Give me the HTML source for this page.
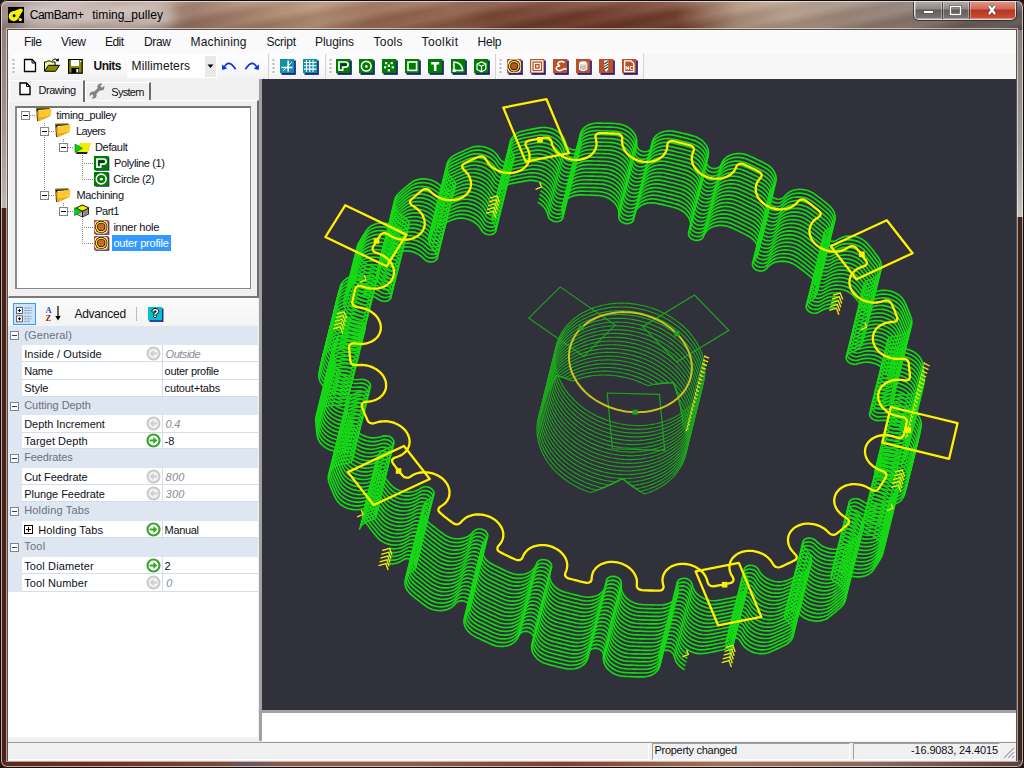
<!DOCTYPE html>
<html><head><meta charset="utf-8"><title>CamBam+ timing_pulley</title><style>
html,body{margin:0;padding:0;width:1024px;height:768px;overflow:hidden;background:#1c1412;font-family:"Liberation Sans",sans-serif}
#root{position:absolute;left:0;top:0;width:1024px;height:768px;overflow:hidden;border-radius:7px}
.t{position:absolute;white-space:pre;font-family:"Liberation Sans",sans-serif}
#frame{position:absolute;left:0;top:0;width:1024px;height:768px;box-sizing:border-box;border:1px solid #140c0a;border-radius:7px;box-shadow:inset 0 0 0 1px rgba(255,255,255,.62);pointer-events:none}
#cap{position:absolute;left:0;top:0;width:1024px;height:30px;background:
 linear-gradient(rgba(255,255,255,.20),rgba(255,255,255,.04) 45%,rgba(0,0,0,.10)),
 repeating-linear-gradient(168deg,rgba(255,255,255,.07) 0,rgba(0,0,0,.06) 9px,rgba(255,255,255,.07) 18px),
 linear-gradient(90deg,#9c8680 0,#ab948c 6%,#a48a7e 14%,#96705e 19%,#a98468 27%,#b08a6c 31%,#94644a 37%,#8b5a42 44%,#76402c 48%,#6c3322 56%,#6e3624 66%,#8a5e48 68.5%,#ab8c76 72%,#b39a86 77%,#9c8474 82%,#8a766c 88%,#6e605c 94%,#5c5250 100%)}
#capglow{position:absolute;left:20px;top:3px;width:155px;height:24px;border-radius:12px;background:rgba(255,255,255,.42);filter:blur(6px)}
#capbtn{position:absolute;left:914px;top:0;width:102px;height:19.5px;border:1px solid rgba(255,255,255,.75);border-top:none;border-radius:0 0 5px 5px;box-sizing:border-box;overflow:hidden;box-shadow:0 0 0 1px rgba(40,30,30,.7)}
.cb{position:absolute;top:0;height:19px;background:linear-gradient(#b9b4b2,#8c8684 48%,#625c5a 52%,#7c7674);border-right:1px solid rgba(40,30,30,.6);box-shadow:inset 0 0 0 1px rgba(255,255,255,.35);box-sizing:border-box}
.cx{background:linear-gradient(#e0a090,#cf6a55 48%,#b83320 52%,#cc5036);border-right:none}
</style></head><body><div id="root">
<div id="cap"></div>
<div id="capglow"></div>
<div style="position:absolute;left:0px;top:30px;width:8px;height:180px;background:linear-gradient(#94807a,#a4948e 55%,#c0b6b0)"></div>
<div style="position:absolute;left:0px;top:208px;width:8px;height:560px;background:#4a2218"></div>
<div style="position:absolute;left:1016px;top:30px;width:8px;height:190px;background:linear-gradient(#85807e,#a09c9a 60%,#c6c2be)"></div>
<div style="position:absolute;left:1016px;top:217px;width:8px;height:551px;background:#3d2620"></div>
<div style="position:absolute;left:0px;top:760px;width:1024px;height:8px;background:linear-gradient(90deg,#5a281c 0,#6a3020 10%,#7a4a3c 22%,#6a5560 24%,#8a5a48 28%,#8c5e4a 40%,#7a4030 55%,#a07058 70%,#8a6a5c 85%,#5a4038 100%)"></div>
<div style="position:absolute;left:7px;top:29px;width:1010px;height:732px;border:1px solid #5a504c;box-sizing:border-box;background:#f0f0f0"></div>
<div style="position:absolute;left:6px;top:28px;width:1012px;height:734px;border:1px solid rgba(255,255,255,.55);box-sizing:border-box;"></div>
<div id="capbtn"><div class="cb" style="left:0;width:28px"></div><div class="cb" style="left:28px;width:27px"></div><div class="cb cx" style="left:55px;width:47px"></div></div>
<svg style="position:absolute;left:914px;top:0px" width="102" height="20" viewBox="0 0 102 20"><rect x="9.5" y="10.5" width="10" height="3" fill="#fff" stroke="#444" stroke-width=".8"/><rect x="36.5" y="6.5" width="10" height="8" fill="none" stroke="#444" stroke-width="2.6"/><rect x="36.5" y="6.5" width="10" height="8" fill="none" stroke="#fff" stroke-width="1.5"/><path d="M75,6 l6,8 M81,6 l-6,8" stroke="#444" stroke-width="3.6"/><path d="M75,6 l6,8 M81,6 l-6,8" stroke="#fff" stroke-width="2.3"/></svg>
<svg style="position:absolute;left:8px;top:7px" width="16" height="16" viewBox="0 0 16 16"><rect width="16" height="16" fill="#000"/><g fill="#f5f500"><circle cx="5.7" cy="9.2" r="5"/><circle cx="12.9" cy="3.2" r="1.8"/><path d="M2.2,5.6 L11.9,1.7 L14.6,3.9 L9.8,12.2z"/></g><circle cx="6.1" cy="8.8" r="1.45" fill="#000"/><circle cx="12.3" cy="12.6" r="1.7" fill="#f5f500"/></svg>
<span class="t" style="left:29.7px;top:8.8px;font-size:12px;line-height:12px;letter-spacing:-0.453px;color:#000;">CamBam+</span>
<span class="t" style="left:92.2px;top:8.8px;font-size:12px;line-height:12px;letter-spacing:0.064px;color:#000;">timing_pulley</span>
<div style="position:absolute;left:8px;top:30px;width:1008px;height:24px;background:#fafafa"></div>
<span class="t" style="left:24.0px;top:35.7px;font-size:12px;line-height:12px;letter-spacing:-0.445px;color:#14141e;">File</span>
<span class="t" style="left:61.0px;top:35.7px;font-size:12px;line-height:12px;letter-spacing:-0.264px;color:#14141e;">View</span>
<span class="t" style="left:105.0px;top:35.7px;font-size:12px;line-height:12px;letter-spacing:-0.559px;color:#14141e;">Edit</span>
<span class="t" style="left:144.0px;top:35.7px;font-size:12px;line-height:12px;letter-spacing:-0.334px;color:#14141e;">Draw</span>
<span class="t" style="left:190.5px;top:35.7px;font-size:12px;line-height:12px;letter-spacing:0.163px;color:#14141e;">Machining</span>
<span class="t" style="left:266.5px;top:35.7px;font-size:12px;line-height:12px;letter-spacing:-0.235px;color:#14141e;">Script</span>
<span class="t" style="left:315.0px;top:35.7px;font-size:12px;line-height:12px;letter-spacing:-0.059px;color:#14141e;">Plugins</span>
<span class="t" style="left:373.5px;top:35.7px;font-size:12px;line-height:12px;letter-spacing:0.247px;color:#14141e;">Tools</span>
<span class="t" style="left:421.5px;top:35.7px;font-size:12px;line-height:12px;letter-spacing:0.415px;color:#14141e;">Toolkit</span>
<span class="t" style="left:477.5px;top:35.7px;font-size:12px;line-height:12px;letter-spacing:-0.226px;color:#14141e;">Help</span>
<div style="position:absolute;left:8px;top:54px;width:1008px;height:25px;background:#f7f7f7"></div>
<div style="position:absolute;left:10px;top:54px;width:259px;height:25px;background:linear-gradient(#fdfdfd,#f9f9f9 60%,#f1f1f1);border-radius:3px 0 0 3px;border-right:1px solid #d4d4d4;box-sizing:border-box"></div>
<svg style="position:absolute;left:12px;top:58px" width="3" height="18" viewBox="0 0 3 18"><rect x="0.5" y="1" width="2" height="2" fill="#b9b9b9"/><rect x="0.5" y="5" width="2" height="2" fill="#b9b9b9"/><rect x="0.5" y="9" width="2" height="2" fill="#b9b9b9"/><rect x="0.5" y="13" width="2" height="2" fill="#b9b9b9"/></svg>
<div style="position:absolute;left:270px;top:54px;width:55.5px;height:25px;background:linear-gradient(#fdfdfd,#f9f9f9 60%,#f1f1f1);border-radius:3px 0 0 3px;border-right:1px solid #d4d4d4;box-sizing:border-box"></div>
<svg style="position:absolute;left:272px;top:58px" width="3" height="18" viewBox="0 0 3 18"><rect x="0.5" y="1" width="2" height="2" fill="#b9b9b9"/><rect x="0.5" y="5" width="2" height="2" fill="#b9b9b9"/><rect x="0.5" y="9" width="2" height="2" fill="#b9b9b9"/><rect x="0.5" y="13" width="2" height="2" fill="#b9b9b9"/></svg>
<div style="position:absolute;left:326.5px;top:54px;width:169.5px;height:25px;background:linear-gradient(#fdfdfd,#f9f9f9 60%,#f1f1f1);border-radius:3px 0 0 3px;border-right:1px solid #d4d4d4;box-sizing:border-box"></div>
<svg style="position:absolute;left:328.5px;top:58px" width="3" height="18" viewBox="0 0 3 18"><rect x="0.5" y="1" width="2" height="2" fill="#b9b9b9"/><rect x="0.5" y="5" width="2" height="2" fill="#b9b9b9"/><rect x="0.5" y="9" width="2" height="2" fill="#b9b9b9"/><rect x="0.5" y="13" width="2" height="2" fill="#b9b9b9"/></svg>
<div style="position:absolute;left:497px;top:54px;width:147px;height:25px;background:linear-gradient(#fdfdfd,#f9f9f9 60%,#f1f1f1);border-radius:3px 0 0 3px;border-right:1px solid #d4d4d4;box-sizing:border-box"></div>
<svg style="position:absolute;left:499px;top:58px" width="3" height="18" viewBox="0 0 3 18"><rect x="0.5" y="1" width="2" height="2" fill="#b9b9b9"/><rect x="0.5" y="5" width="2" height="2" fill="#b9b9b9"/><rect x="0.5" y="9" width="2" height="2" fill="#b9b9b9"/><rect x="0.5" y="13" width="2" height="2" fill="#b9b9b9"/></svg>
<svg style="position:absolute;left:23px;top:58px" width="14" height="16" viewBox="0 0 14 16"><path d="M1.5,1.5 h7.5 l3.5,3.5 v8.5 h-11z" fill="#fff" stroke="#000" stroke-width="1.3"/><path d="M9,1.5 v3.5 h3.5" fill="none" stroke="#000" stroke-width="1"/></svg>
<svg style="position:absolute;left:43px;top:57px" width="18" height="16" viewBox="0 0 18 16"><path d="M9,3.5 q3,-3 6,-0.5" fill="none" stroke="#000" stroke-width="1"/><path d="M15.8,1 v3.2 h-3.2z" fill="#000"/><path d="M1.5,14 v-9 h2 l1,-1 h3 l1,1 h3.5 v3" fill="#f4f4a0" stroke="#000" stroke-width="1"/><path d="M1.5,14.3 l4,-6 h11 l-4,6z" fill="#8a8a00" stroke="#000" stroke-width="1"/></svg>
<svg style="position:absolute;left:68px;top:58.5px" width="15" height="15" viewBox="0 0 15 15"><rect x="0.6" y="0.6" width="13.6" height="13.6" fill="#8a8a00" stroke="#000" stroke-width="1.2"/><rect x="3" y="1" width="8" height="6" fill="#fff"/><rect x="3.5" y="9" width="7.5" height="5" fill="#000"/><rect x="8.3" y="10" width="2" height="3.4" fill="#fff"/><rect x="12" y="1.6" width="1.3" height="1.6" fill="#fff"/></svg>
<span class="t" style="left:93.5px;top:60.1px;font-size:12px;line-height:12px;letter-spacing:-0.500px;color:#111;font-weight:bold;">Units</span>
<div style="position:absolute;left:127px;top:55px;width:89.5px;height:22.5px;background:#fff"></div>
<div style="position:absolute;left:205px;top:56px;width:11px;height:20.5px;background:#e9e9e9"></div>
<svg style="position:absolute;left:207px;top:64px" width="8" height="5" viewBox="0 0 8 5"><path d="M0.5,0.5 h6 l-3,3.6z" fill="#000"/></svg>
<span class="t" style="left:131.6px;top:60.1px;font-size:12px;line-height:12px;letter-spacing:0.107px;color:#111;">Millimeters</span>
<svg style="position:absolute;left:221px;top:60px" width="16" height="12" viewBox="0 0 16 12"><path d="M3,7.6 Q7.5,-1.6 14.6,9.2" fill="none" stroke="#1030e8" stroke-width="1.7"/><path d="M0.9,4.6 l0.3,5.4 l5,-1.4z" fill="#1030e8"/></svg>
<svg style="position:absolute;left:244px;top:60px" width="16" height="12" viewBox="0 0 16 12"><path d="M13,7.6 Q8.5,-1.6 1.4,9.2" fill="none" stroke="#1030e8" stroke-width="1.7"/><path d="M15.1,4.6 l-0.3,5.4 l-5,-1.4z" fill="#1030e8"/></svg>
<svg style="position:absolute;left:280px;top:58.8px" width="16" height="16" viewBox="0 0 16 16"><rect x="1.5" y="1.5" width="14.3" height="14.3" fill="#101080"/><rect x="0" y="0" width="14.4" height="14.2" fill="#1390a6"/><path d="M1.5,8.5 h11 M8.2,1.5 v11" fill="none" stroke="#fff" stroke-width="1.6"/><path d="M3,12 l9,-9" stroke="#e8f4f6" stroke-width="1"/></svg>
<svg style="position:absolute;left:303px;top:58.8px" width="16" height="16" viewBox="0 0 16 16"><rect x="1.5" y="1.5" width="14.3" height="14.3" fill="#101080"/><rect x="0" y="0" width="14.4" height="14.2" fill="#1390a6"/><path d="M1,3.5 h12.5 M1,6.8 h12.5 M1,10.1 h12.5 M3.5,1 v12 M6.8,1 v12 M10.1,1 v12" fill="none" stroke="#fff" stroke-width="1.1"/></svg>
<svg style="position:absolute;left:336px;top:58.8px" width="16" height="16" viewBox="0 0 16 16"><rect x="1.5" y="1.5" width="14.3" height="14.3" fill="#101080"/><rect x="0" y="0" width="14.4" height="14.2" fill="#007d00"/><path d="M3,3 h6.5 q2.6,0 2.6,2.6 q0,2.6 -2.6,2.6 h-2.8 v3 h-3.7z" fill="none" stroke="#fff" stroke-width="1.7"/><path d="M4.4,4.4 h5 q1.4,0 1.4,1.3 q0,1.2 -1.4,1.2 h-4 v3 h-1z" fill="#032"/></svg>
<svg style="position:absolute;left:359px;top:58.8px" width="16" height="16" viewBox="0 0 16 16"><rect x="1.5" y="1.5" width="14.3" height="14.3" fill="#101080"/><rect x="0" y="0" width="14.4" height="14.2" fill="#007d00"/><circle cx="7.2" cy="7.2" r="4.8" fill="none" stroke="#fff" stroke-width="1.6"/><circle cx="7.4" cy="7.4" r="1.3" fill="#fff"/></svg>
<svg style="position:absolute;left:382px;top:58.8px" width="16" height="16" viewBox="0 0 16 16"><rect x="1.5" y="1.5" width="14.3" height="14.3" fill="#101080"/><rect x="0" y="0" width="14.4" height="14.2" fill="#007d00"/><rect x="3" y="3" width="2.2" height="2.2" fill="#fff"/><rect x="8.6" y="3" width="2.2" height="2.2" fill="#fff"/><rect x="2" y="7.2" width="2.2" height="2.2" fill="#fff"/><rect x="9.6" y="7.2" width="2.2" height="2.2" fill="#fff"/><rect x="5.8" y="10.2" width="2.2" height="2.2" fill="#fff"/><rect x="5.8" y="5.6" width="2.2" height="2.2" fill="#fff"/></svg>
<svg style="position:absolute;left:405px;top:58.8px" width="16" height="16" viewBox="0 0 16 16"><rect x="1.5" y="1.5" width="14.3" height="14.3" fill="#101080"/><rect x="0" y="0" width="14.4" height="14.2" fill="#007d00"/><rect x="3" y="3" width="8.6" height="8.4" fill="none" stroke="#fff" stroke-width="1.6"/></svg>
<svg style="position:absolute;left:428px;top:58.8px" width="16" height="16" viewBox="0 0 16 16"><rect x="1.5" y="1.5" width="14.3" height="14.3" fill="#101080"/><rect x="0" y="0" width="14.4" height="14.2" fill="#007d00"/><path d="M3.2,3 h8 v2.4 h-2.7 v6.6 h-2.6 v-6.6 h-2.7z" fill="#fff"/></svg>
<svg style="position:absolute;left:451px;top:58.8px" width="16" height="16" viewBox="0 0 16 16"><rect x="1.5" y="1.5" width="14.3" height="14.3" fill="#101080"/><rect x="0" y="0" width="14.4" height="14.2" fill="#007d00"/><path d="M3,11.5 v-8.5 q8,0.5 8.7,8.5z" fill="none" stroke="#fff" stroke-width="1.5"/><rect x="1.6" y="10" width="3" height="3" fill="#fff"/></svg>
<svg style="position:absolute;left:474px;top:58.8px" width="16" height="16" viewBox="0 0 16 16"><rect x="1.5" y="1.5" width="14.3" height="14.3" fill="#101080"/><rect x="0" y="0" width="14.4" height="14.2" fill="#007d00"/><path d="M3,5 l4.5,-2 l4.3,2 v5.5 l-4.3,2.3 l-4.5,-2.3z M3,5 l4.5,2.2 l4.3,-2.2 M7.5,7.2 v5.6" fill="none" stroke="#fff" stroke-width="1.2"/></svg>
<svg style="position:absolute;left:507px;top:58.8px" width="16" height="16" viewBox="0 0 16 16"><rect x="1.5" y="1.5" width="14.3" height="14.3" fill="#101080"/><rect x="0" y="0" width="14.4" height="14.2" fill="#b8522b"/><rect x="1.2" y="1.2" width="12" height="12" rx="3.5" fill="none" stroke="#fff" stroke-width="1.2"/><circle cx="7.2" cy="7.2" r="4.7" fill="#b8522b" stroke="#000" stroke-width="2.8"/><circle cx="7.2" cy="7.2" r="4.7" fill="none" stroke="#f4e000" stroke-width="1.5"/></svg>
<svg style="position:absolute;left:530px;top:58.8px" width="16" height="16" viewBox="0 0 16 16"><rect x="1.5" y="1.5" width="14.3" height="14.3" fill="#101080"/><rect x="0" y="0" width="14.4" height="14.2" fill="#b8522b"/><rect x="1.8" y="1.8" width="11" height="11" fill="none" stroke="#fff" stroke-width="1.2"/><rect x="4.3" y="4.3" width="6" height="6" fill="none" stroke="#fff" stroke-width="1.2"/><rect x="6.3" y="6.3" width="2" height="2" fill="#fff"/></svg>
<svg style="position:absolute;left:553px;top:58.8px" width="16" height="16" viewBox="0 0 16 16"><rect x="1.5" y="1.5" width="14.3" height="14.3" fill="#101080"/><rect x="0" y="0" width="14.4" height="14.2" fill="#b8522b"/><path d="M11.5,3.5 q-3.5,-2 -6,0 q-2,2 1.5,3.2 q-5,0.8 -3.5,3.5 q1.8,2.6 5.5,0.6 q3,-1.8 4.6,-0.4" fill="none" stroke="#fff" stroke-width="1.5"/></svg>
<svg style="position:absolute;left:576px;top:58.8px" width="16" height="16" viewBox="0 0 16 16"><rect x="1.5" y="1.5" width="14.3" height="14.3" fill="#101080"/><rect x="0" y="0" width="14.4" height="14.2" fill="#b8522b"/><path d="M3.5,4 v6.5 q3.7,2.6 7.4,0 v-6.5" fill="#ddd" stroke="#fff" stroke-width="1"/><ellipse cx="7.2" cy="4" rx="3.7" ry="1.7" fill="#fff" stroke="#ccc" stroke-width=".6"/><path d="M4,7 q3.2,1.8 6.4,0 M4,9 q3.2,1.8 6.4,0" fill="none" stroke="#999" stroke-width=".7"/></svg>
<svg style="position:absolute;left:599px;top:58.8px" width="16" height="16" viewBox="0 0 16 16"><rect x="1.5" y="1.5" width="14.3" height="14.3" fill="#101080"/><rect x="0" y="0" width="14.4" height="14.2" fill="#b8522b"/><path d="M5.2,1.5 h4 v8.5 l-2,3 l-2,-3z" fill="#fff"/><path d="M5.2,5 l4,-2.5 M5.2,7.6 l4,-2.5 M5.2,10.2 l4,-2.5" stroke="#333" stroke-width="1.1"/></svg>
<svg style="position:absolute;left:622px;top:58.8px" width="16" height="16" viewBox="0 0 16 16"><rect x="1.5" y="1.5" width="14.3" height="14.3" fill="#101080"/><rect x="0" y="0" width="14.4" height="14.2" fill="#b8522b"/><path d="M2.6,1.8 h6.4 l2.8,2.8 v8 h-9.2z" fill="none" stroke="#fff" stroke-width="1.3"/><path d="M4.2,10.8 v-3.6 l2.2,3.6 v-3.6 M10.6,7.6 q-2.6,-1 -2.6,1.4 q0,2.4 2.6,1.4" fill="none" stroke="#fff" stroke-width="1"/></svg>
<div style="position:absolute;left:8px;top:79px;width:251px;height:662px;background:#f0f0f0"></div>
<div style="position:absolute;left:84.5px;top:82px;width:66px;height:19px;background:#f0f0f0;border:1px solid #fff;border-right:2px solid #6d6d6d;border-bottom:none;box-sizing:border-box"></div>
<div style="position:absolute;left:8px;top:100px;width:250.5px;height:198px;border:1px solid #fff;border-right:2px solid #6d6d6d;border-bottom:2px solid #7a7a7a;box-sizing:border-box;background:#f0f0f0"></div>
<div style="position:absolute;left:9px;top:80px;width:76px;height:22px;background:#f3f3f3;border:1px solid #fff;border-right:2px solid #6d6d6d;border-bottom:none;box-sizing:border-box"></div>
<svg style="position:absolute;left:18.5px;top:82px" width="13" height="14" viewBox="0 0 13 14"><path d="M1,1 h6.5 l3.5,3.5 v8 h-10z" fill="#fff" stroke="#000" stroke-width="1.4"/><path d="M7.5,1 v3.5 h3.5" fill="none" stroke="#000" stroke-width="1"/></svg>
<svg style="position:absolute;left:89px;top:83px" width="16" height="16" viewBox="0 0 16 16"><path d="M4.6,11.4 L11.4,4.6" stroke="#858181" stroke-width="3.1"/><circle cx="11.9" cy="4.1" r="3.5" fill="#858181"/><circle cx="4.1" cy="11.9" r="3.5" fill="#858181"/><path d="M12.2,3.8 L16,0" stroke="#f1f1f1" stroke-width="2.5"/><path d="M3.8,12.2 L0,16" stroke="#f1f1f1" stroke-width="2.5"/></svg>
<span class="t" style="left:38.5px;top:85.0px;font-size:11px;line-height:11px;letter-spacing:-0.474px;color:#101018;">Drawing</span>
<span class="t" style="left:111.3px;top:87.0px;font-size:11px;line-height:11px;letter-spacing:-0.735px;color:#101018;">System</span>
<div style="position:absolute;left:15px;top:105.5px;width:236px;height:183.5px;background:#fff;border:1px solid #828790;border-top:2px solid #767676;border-left:2px solid #8a8a8a;box-sizing:border-box"></div>
<div style="position:absolute;left:30px;top:115.2px;width:6px;height:1px;background:repeating-linear-gradient(90deg,#8c8c8c 0 1px,transparent 1px 2px)"></div>
<div style="position:absolute;left:44px;top:123px;width:1px;height:68.3px;background:repeating-linear-gradient(#8c8c8c 0 1px,transparent 1px 2px)"></div>
<div style="position:absolute;left:49px;top:131.2px;width:6px;height:1px;background:repeating-linear-gradient(90deg,#8c8c8c 0 1px,transparent 1px 2px)"></div>
<div style="position:absolute;left:49px;top:195.3px;width:6px;height:1px;background:repeating-linear-gradient(90deg,#8c8c8c 0 1px,transparent 1px 2px)"></div>
<div style="position:absolute;left:63px;top:139px;width:1px;height:4.2px;background:repeating-linear-gradient(#8c8c8c 0 1px,transparent 1px 2px)"></div>
<div style="position:absolute;left:68px;top:147.2px;width:6px;height:1px;background:repeating-linear-gradient(90deg,#8c8c8c 0 1px,transparent 1px 2px)"></div>
<div style="position:absolute;left:82px;top:155px;width:1px;height:24.3px;background:repeating-linear-gradient(#8c8c8c 0 1px,transparent 1px 2px)"></div>
<div style="position:absolute;left:82px;top:163.3px;width:12px;height:1px;background:repeating-linear-gradient(90deg,#8c8c8c 0 1px,transparent 1px 2px)"></div>
<div style="position:absolute;left:82px;top:179.3px;width:12px;height:1px;background:repeating-linear-gradient(90deg,#8c8c8c 0 1px,transparent 1px 2px)"></div>
<div style="position:absolute;left:63px;top:203px;width:1px;height:4.4px;background:repeating-linear-gradient(#8c8c8c 0 1px,transparent 1px 2px)"></div>
<div style="position:absolute;left:68px;top:211.4px;width:6px;height:1px;background:repeating-linear-gradient(90deg,#8c8c8c 0 1px,transparent 1px 2px)"></div>
<div style="position:absolute;left:82px;top:219px;width:1px;height:24.4px;background:repeating-linear-gradient(#8c8c8c 0 1px,transparent 1px 2px)"></div>
<div style="position:absolute;left:82px;top:227.4px;width:12px;height:1px;background:repeating-linear-gradient(90deg,#8c8c8c 0 1px,transparent 1px 2px)"></div>
<div style="position:absolute;left:82px;top:243.4px;width:12px;height:1px;background:repeating-linear-gradient(90deg,#8c8c8c 0 1px,transparent 1px 2px)"></div>
<svg style="position:absolute;left:21px;top:110.7px" width="9" height="9" viewBox="0 0 9 9"><rect x=".5" y=".5" width="8" height="8" fill="#fff" stroke="#848484"/><path d="M2,4.5 h5" stroke="#000"/></svg>
<svg style="position:absolute;left:40px;top:126.7px" width="9" height="9" viewBox="0 0 9 9"><rect x=".5" y=".5" width="8" height="8" fill="#fff" stroke="#848484"/><path d="M2,4.5 h5" stroke="#000"/></svg>
<svg style="position:absolute;left:59px;top:142.7px" width="9" height="9" viewBox="0 0 9 9"><rect x=".5" y=".5" width="8" height="8" fill="#fff" stroke="#848484"/><path d="M2,4.5 h5" stroke="#000"/></svg>
<svg style="position:absolute;left:40px;top:190.8px" width="9" height="9" viewBox="0 0 9 9"><rect x=".5" y=".5" width="8" height="8" fill="#fff" stroke="#848484"/><path d="M2,4.5 h5" stroke="#000"/></svg>
<svg style="position:absolute;left:59px;top:206.9px" width="9" height="9" viewBox="0 0 9 9"><rect x=".5" y=".5" width="8" height="8" fill="#fff" stroke="#848484"/><path d="M2,4.5 h5" stroke="#000"/></svg>
<svg style="position:absolute;left:36px;top:107px" width="16" height="16" viewBox="0 0 16 16"><path d="M0.2,0.8 L13.4,0.6 L13.6,2.2 L2.4,3 L2.4,14 L1,14z" fill="#2a2608"/><path d="M0.2,0.8 L13.4,0.6 L13.4,1.2 L0.4,1.6z" fill="#c8b020"/><path d="M0.9,4.4 L2.7,3.8 L2.7,14 L1.9,14.8z" fill="#d88818"/><path d="M2.7,3.8 L15.4,1.6 L14.7,9 L2.2,14.6z" fill="#ffc62e"/><path d="M2.5,10.8 L14.7,9 L2.2,14.6z" fill="#e8a224"/><path d="M10.6,8 l1.8,-1.6 l0,1.6z" fill="#fff020"/><circle cx="5.2" cy="12" r=".7" fill="#ffe030"/></svg>
<svg style="position:absolute;left:55px;top:123px" width="16" height="16" viewBox="0 0 16 16"><path d="M0.2,0.8 L13.4,0.6 L13.6,2.2 L2.4,3 L2.4,14 L1,14z" fill="#2a2608"/><path d="M0.2,0.8 L13.4,0.6 L13.4,1.2 L0.4,1.6z" fill="#c8b020"/><path d="M0.9,4.4 L2.7,3.8 L2.7,14 L1.9,14.8z" fill="#d88818"/><path d="M2.7,3.8 L15.4,1.6 L14.7,9 L2.2,14.6z" fill="#ffc62e"/><path d="M2.5,10.8 L14.7,9 L2.2,14.6z" fill="#e8a224"/><path d="M10.6,8 l1.8,-1.6 l0,1.6z" fill="#fff020"/><circle cx="5.2" cy="12" r=".7" fill="#ffe030"/></svg>
<svg style="position:absolute;left:55px;top:187.5px" width="16" height="16" viewBox="0 0 16 16"><path d="M0.2,0.8 L13.4,0.6 L13.6,2.2 L2.4,3 L2.4,14 L1,14z" fill="#2a2608"/><path d="M0.2,0.8 L13.4,0.6 L13.4,1.2 L0.4,1.6z" fill="#c8b020"/><path d="M0.9,4.4 L2.7,3.8 L2.7,14 L1.9,14.8z" fill="#d88818"/><path d="M2.7,3.8 L15.4,1.6 L14.7,9 L2.2,14.6z" fill="#ffc62e"/><path d="M2.5,10.8 L14.7,9 L2.2,14.6z" fill="#e8a224"/><path d="M10.6,8 l1.8,-1.6 l0,1.6z" fill="#fff020"/><circle cx="5.2" cy="12" r=".7" fill="#ffe030"/></svg>
<svg style="position:absolute;left:74px;top:141.5px" width="17" height="13" viewBox="0 0 17 13"><path d="M2,12 l3,-9 h11 l-3,9z" fill="#222"/><path d="M3,10 l3,-9 h11 l-3,9z" fill="#f2ec00"/><path d="M1,2 v8.5 l7.5,-4.2z" fill="#00d800" stroke="#063" stroke-width=".6"/></svg>
<svg style="position:absolute;left:94px;top:156.2px" width="16" height="15" viewBox="0 0 16 15"><rect x="1.3" y="1.3" width="14" height="13.4" fill="#101080"/><rect width="14.6" height="14" fill="#007d00"/><path d="M3,3 h6.5 q2.6,0 2.6,2.6 q0,2.6 -2.6,2.6 h-2.8 v3 h-3.7z" fill="none" stroke="#fff" stroke-width="1.7"/><path d="M4.4,4.4 h5 q1.4,0 1.4,1.3 q0,1.2 -1.4,1.2 h-4 v3 h-1z" fill="#032"/></svg>
<svg style="position:absolute;left:94px;top:172.2px" width="16" height="15" viewBox="0 0 16 15"><rect x="1.3" y="1.3" width="14" height="13.4" fill="#101080"/><rect width="14.6" height="14" fill="#007d00"/><circle cx="7.2" cy="7" r="4.9" fill="none" stroke="#fff" stroke-width="1.6"/><circle cx="7.4" cy="7.2" r="1.4" fill="#fff"/></svg>
<svg style="position:absolute;left:74px;top:204px" width="16" height="14" viewBox="0 0 16 14"><path d="M8.5,0.6 l6.5,3 v6.6 l-6.5,3.4 l-6.5,-3.4 v-6.6z" fill="#000"/><path d="M8.5,1.4 l5.6,2.6 l-5.6,2.8 l-5.6,-2.8z" fill="#f2ec00"/><path d="M8.9,7.4 l5.4,-2.7 v5.3 l-5.4,2.8z" fill="#8c8c8c"/><path d="M8.1,7.4 v5.4 l-5.4,-2.8 v-5.3z" fill="#bdbdbd"/><path d="M0.6,3.6 v8 l7,-4z" fill="#00d800" stroke="#063" stroke-width=".6"/></svg>
<svg style="position:absolute;left:94px;top:220.3px" width="16" height="15" viewBox="0 0 16 15"><rect x="1.3" y="1.3" width="14" height="13.4" fill="#101080"/><rect width="14.6" height="14" fill="#b8522b"/><rect x="1.2" y="1.2" width="12" height="11.8" rx="3.5" fill="none" stroke="#fff" stroke-width="1.1"/><circle cx="7.2" cy="7" r="4.8" fill="#c8663a" stroke="#000" stroke-width="2.7"/><circle cx="7.2" cy="7" r="4.8" fill="none" stroke="#f4e000" stroke-width="1.4"/></svg>
<svg style="position:absolute;left:94px;top:236.3px" width="16" height="15" viewBox="0 0 16 15"><rect x="1.3" y="1.3" width="14" height="13.4" fill="#101080"/><rect width="14.6" height="14" fill="#b8522b"/><rect x="1.2" y="1.2" width="12" height="11.8" rx="3.5" fill="none" stroke="#fff" stroke-width="1.1"/><circle cx="7.2" cy="7" r="4.8" fill="#c8663a" stroke="#000" stroke-width="2.7"/><circle cx="7.2" cy="7" r="4.8" fill="none" stroke="#f4e000" stroke-width="1.4"/></svg>
<div style="position:absolute;left:112px;top:235.2px;width:59px;height:15.5px;background:#3399ff"></div>
<span class="t" style="left:56.2px;top:109.9px;font-size:11px;line-height:11px;letter-spacing:-0.316px;color:#101018;">timing_pulley</span>
<span class="t" style="left:76.0px;top:125.8px;font-size:11px;line-height:11px;letter-spacing:-0.663px;color:#101018;">Layers</span>
<span class="t" style="left:95.0px;top:141.8px;font-size:11px;line-height:11px;letter-spacing:-0.342px;color:#101018;">Default</span>
<span class="t" style="left:114.0px;top:157.9px;font-size:11px;line-height:11px;letter-spacing:-0.374px;color:#101018;">Polyline (1)</span>
<span class="t" style="left:113.3px;top:173.9px;font-size:11px;line-height:11px;letter-spacing:-0.357px;color:#101018;">Circle (2)</span>
<span class="t" style="left:76.5px;top:190.0px;font-size:11px;line-height:11px;letter-spacing:-0.329px;color:#101018;">Machining</span>
<span class="t" style="left:95.3px;top:206.0px;font-size:11px;line-height:11px;letter-spacing:-0.548px;color:#101018;">Part1</span>
<span class="t" style="left:113.4px;top:222.2px;font-size:11px;line-height:11px;letter-spacing:-0.257px;color:#101018;">inner hole</span>
<span class="t" style="left:113.4px;top:238.2px;font-size:11px;line-height:11px;letter-spacing:-0.224px;color:#fff;">outer profile</span>
<div style="position:absolute;left:8px;top:298px;width:250px;height:443px;background:#fff"></div>
<div style="position:absolute;left:8px;top:298px;width:250px;height:28.5px;background:linear-gradient(#fbfbfb,#f3f3f3)"></div>
<div style="position:absolute;left:13px;top:303px;width:23px;height:22px;background:#cbe4f9;border:1px solid #3c9af5;box-sizing:border-box"></div>
<svg style="position:absolute;left:15px;top:306px" width="19" height="17" viewBox="0 0 19 17"><g fill="#fff" stroke="#555" stroke-width=".9"><rect x="1.5" y="1.5" width="6" height="6"/><rect x="1.5" y="9.8" width="6" height="6"/></g><path d="M3,4.5 h3 M4.5,3 v3 M3,12.8 h3 M4.5,11.3 v3" stroke="#000" stroke-width="1"/><path d="M9.5,2 h7 M9.5,4.5 h7 M9.5,7 h7 M9.5,10.3 h7 M9.5,12.8 h7 M9.5,15.3 h5" stroke="#7a8aa8" stroke-width="1" stroke-dasharray="2 1"/></svg>
<span class="t" style="left:45.6px;top:305.8px;font-size:8.5px;line-height:8.5px;letter-spacing:0.000px;color:#2450b4;font-weight:bold;font-family:'Liberation Serif',serif;">A</span>
<span class="t" style="left:45.6px;top:314.3px;font-size:8.5px;line-height:8.5px;letter-spacing:0.000px;color:#8c2222;font-weight:bold;font-family:'Liberation Serif',serif;">Z</span>
<svg style="position:absolute;left:54px;top:305px" width="8" height="17" viewBox="0 0 8 17"><path d="M4,1 v13" stroke="#000" stroke-width="1.2"/><path d="M1.3,11 h5.4 l-2.7,4.6z" fill="#000"/></svg>
<span class="t" style="left:74.4px;top:307.9px;font-size:12px;line-height:12px;letter-spacing:-0.239px;color:#111;">Advanced</span>
<div style="position:absolute;left:136px;top:307px;width:1px;height:14px;background:#bdbdbd"></div>
<svg style="position:absolute;left:148px;top:306.8px" width="16" height="15" viewBox="0 0 16 15"><rect x="1.4" y="1.4" width="14" height="13.4" fill="#101080"/><rect width="14.2" height="13.4" fill="#06c0cc"/></svg>
<span class="t" style="left:151.8px;top:307.9px;font-size:11.5px;line-height:11.5px;letter-spacing:0.000px;color:#fff;font-weight:bold;text-shadow:-1px 0 #000,1px 0 #000,0 -1px #000,0 1px #000;">?</span>
<div style="position:absolute;left:8px;top:326px;width:14px;height:266px;background:#dde6f1"></div>
<div style="position:absolute;left:8px;top:326px;width:250px;height:18.5px;background:#dde6f1"></div>
<svg style="position:absolute;left:10px;top:331.05px" width="9" height="9" viewBox="0 0 9 9"><rect x=".5" y=".5" width="8" height="8" fill="#fff" stroke="#7c8594"/><path d="M2,4.5 h5" stroke="#3c3c44"/></svg>
<span class="t" style="left:24.2px;top:329.7px;font-size:11px;line-height:11px;letter-spacing:0.143px;color:#6e7079;">(General)</span>
<div style="position:absolute;left:22px;top:361px;width:236px;height:1px;background:#d3deec"></div>
<div style="position:absolute;left:162px;top:344.5px;width:1px;height:17.5px;background:#d3deec"></div>
<span class="t" style="left:24.2px;top:348.8px;font-size:11px;line-height:11px;letter-spacing:0.071px;color:#101018;">Inside / Outside</span>
<svg style="position:absolute;left:145.7px;top:345.55px" width="15" height="15" viewBox="0 0 15 15"><circle cx="7.5" cy="7.5" r="6" fill="#f2f2f2" stroke="#c9c9c9" stroke-width="2"/><path d="M11.4,7.5 h-5" stroke="#cfcfcf" stroke-width="2"/><path d="M7.6,4 l-4,3.5 l4,3.5z" fill="#cfcfcf"/></svg>
<span class="t" style="left:165.6px;top:348.8px;font-size:11px;line-height:11px;letter-spacing:-0.485px;color:#8a8a90;font-style:italic;">Outside</span>
<div style="position:absolute;left:22px;top:378.5px;width:236px;height:1px;background:#d3deec"></div>
<div style="position:absolute;left:162px;top:362px;width:1px;height:17.5px;background:#d3deec"></div>
<span class="t" style="left:24.2px;top:365.9px;font-size:11px;line-height:11px;letter-spacing:-0.214px;color:#101018;">Name</span>
<span class="t" style="left:164.6px;top:365.9px;font-size:11px;line-height:11px;letter-spacing:-0.299px;color:#101018;">outer profile</span>
<div style="position:absolute;left:22px;top:395.5px;width:236px;height:1px;background:#d3deec"></div>
<div style="position:absolute;left:162px;top:379.5px;width:1px;height:17px;background:#d3deec"></div>
<span class="t" style="left:24.2px;top:382.9px;font-size:11px;line-height:11px;letter-spacing:-0.064px;color:#101018;">Style</span>
<span class="t" style="left:164.6px;top:382.9px;font-size:11px;line-height:11px;letter-spacing:-0.148px;color:#101018;">cutout+tabs</span>
<div style="position:absolute;left:8px;top:396.5px;width:250px;height:18.5px;background:#dde6f1"></div>
<svg style="position:absolute;left:10px;top:401.55px" width="9" height="9" viewBox="0 0 9 9"><rect x=".5" y=".5" width="8" height="8" fill="#fff" stroke="#7c8594"/><path d="M2,4.5 h5" stroke="#3c3c44"/></svg>
<span class="t" style="left:24.2px;top:400.1px;font-size:11px;line-height:11px;letter-spacing:-0.055px;color:#6e7079;">Cutting Depth</span>
<div style="position:absolute;left:22px;top:431.5px;width:236px;height:1px;background:#d3deec"></div>
<div style="position:absolute;left:162px;top:415px;width:1px;height:17.5px;background:#d3deec"></div>
<span class="t" style="left:24.2px;top:419.0px;font-size:11px;line-height:11px;letter-spacing:-0.044px;color:#101018;">Depth Increment</span>
<svg style="position:absolute;left:145.7px;top:416.05px" width="15" height="15" viewBox="0 0 15 15"><circle cx="7.5" cy="7.5" r="6" fill="#f2f2f2" stroke="#c9c9c9" stroke-width="2"/><path d="M11.4,7.5 h-5" stroke="#cfcfcf" stroke-width="2"/><path d="M7.6,4 l-4,3.5 l4,3.5z" fill="#cfcfcf"/></svg>
<span class="t" style="left:165.6px;top:419.0px;font-size:11px;line-height:11px;letter-spacing:-0.245px;color:#8a8a90;font-style:italic;">0.4</span>
<div style="position:absolute;left:22px;top:448px;width:236px;height:1px;background:#d3deec"></div>
<div style="position:absolute;left:162px;top:432.5px;width:1px;height:16.5px;background:#d3deec"></div>
<span class="t" style="left:24.2px;top:436.0px;font-size:11px;line-height:11px;letter-spacing:0.038px;color:#101018;">Target Depth</span>
<svg style="position:absolute;left:145.7px;top:433.05px" width="15" height="15" viewBox="0 0 15 15"><circle cx="7.5" cy="7.5" r="6" fill="#fff" stroke="#3aa52c" stroke-width="2.2"/><path d="M3.6,7.5 h5" stroke="#3aa52c" stroke-width="2"/><path d="M7.4,4 l4,3.5 l-4,3.5z" fill="#3aa52c"/></svg>
<span class="t" style="left:164.6px;top:436.0px;font-size:11px;line-height:11px;letter-spacing:-0.080px;color:#101018;">-8</span>
<div style="position:absolute;left:8px;top:449px;width:250px;height:19px;background:#dde6f1"></div>
<svg style="position:absolute;left:10px;top:454.3px" width="9" height="9" viewBox="0 0 9 9"><rect x=".5" y=".5" width="8" height="8" fill="#fff" stroke="#7c8594"/><path d="M2,4.5 h5" stroke="#3c3c44"/></svg>
<span class="t" style="left:24.2px;top:452.0px;font-size:11px;line-height:11px;letter-spacing:-0.128px;color:#6e7079;">Feedrates</span>
<div style="position:absolute;left:22px;top:484px;width:236px;height:1px;background:#d3deec"></div>
<div style="position:absolute;left:162px;top:468px;width:1px;height:17px;background:#d3deec"></div>
<span class="t" style="left:24.2px;top:471.8px;font-size:11px;line-height:11px;letter-spacing:-0.072px;color:#101018;">Cut Feedrate</span>
<svg style="position:absolute;left:145.7px;top:468.8px" width="15" height="15" viewBox="0 0 15 15"><circle cx="7.5" cy="7.5" r="6" fill="#f2f2f2" stroke="#c9c9c9" stroke-width="2"/><path d="M11.4,7.5 h-5" stroke="#cfcfcf" stroke-width="2"/><path d="M7.6,4 l-4,3.5 l4,3.5z" fill="#cfcfcf"/></svg>
<span class="t" style="left:165.6px;top:471.8px;font-size:11px;line-height:11px;letter-spacing:0.224px;color:#8a8a90;font-style:italic;">800</span>
<div style="position:absolute;left:22px;top:501px;width:236px;height:1px;background:#d3deec"></div>
<div style="position:absolute;left:162px;top:485px;width:1px;height:17px;background:#d3deec"></div>
<span class="t" style="left:24.2px;top:488.8px;font-size:11px;line-height:11px;letter-spacing:-0.045px;color:#101018;">Plunge Feedrate</span>
<svg style="position:absolute;left:145.7px;top:485.8px" width="15" height="15" viewBox="0 0 15 15"><circle cx="7.5" cy="7.5" r="6" fill="#f2f2f2" stroke="#c9c9c9" stroke-width="2"/><path d="M11.4,7.5 h-5" stroke="#cfcfcf" stroke-width="2"/><path d="M7.6,4 l-4,3.5 l4,3.5z" fill="#cfcfcf"/></svg>
<span class="t" style="left:165.6px;top:488.8px;font-size:11px;line-height:11px;letter-spacing:0.224px;color:#8a8a90;font-style:italic;">300</span>
<div style="position:absolute;left:8px;top:502px;width:250px;height:19px;background:#dde6f1"></div>
<svg style="position:absolute;left:10px;top:507.3px" width="9" height="9" viewBox="0 0 9 9"><rect x=".5" y=".5" width="8" height="8" fill="#fff" stroke="#7c8594"/><path d="M2,4.5 h5" stroke="#3c3c44"/></svg>
<span class="t" style="left:24.2px;top:504.8px;font-size:11px;line-height:11px;letter-spacing:0.183px;color:#6e7079;">Holding Tabs</span>
<div style="position:absolute;left:22px;top:537px;width:236px;height:1px;background:#d3deec"></div>
<div style="position:absolute;left:162px;top:521px;width:1px;height:17px;background:#d3deec"></div>
<svg style="position:absolute;left:24px;top:524.7px" width="9" height="9" viewBox="0 0 9 9"><rect x=".5" y=".5" width="8" height="8" fill="#fff" stroke="#000"/><path d="M2,4.5 h5 M4.5,2 v5" stroke="#000"/></svg>
<span class="t" style="left:38.3px;top:524.8px;font-size:11px;line-height:11px;letter-spacing:0.110px;color:#101018;">Holding Tabs</span>
<svg style="position:absolute;left:145.7px;top:521.8px" width="15" height="15" viewBox="0 0 15 15"><circle cx="7.5" cy="7.5" r="6" fill="#fff" stroke="#3aa52c" stroke-width="2.2"/><path d="M3.6,7.5 h5" stroke="#3aa52c" stroke-width="2"/><path d="M7.4,4 l4,3.5 l-4,3.5z" fill="#3aa52c"/></svg>
<span class="t" style="left:164.6px;top:524.8px;font-size:11px;line-height:11px;letter-spacing:-0.335px;color:#101018;">Manual</span>
<div style="position:absolute;left:8px;top:538px;width:250px;height:19px;background:#dde6f1"></div>
<svg style="position:absolute;left:10px;top:543.3px" width="9" height="9" viewBox="0 0 9 9"><rect x=".5" y=".5" width="8" height="8" fill="#fff" stroke="#7c8594"/><path d="M2,4.5 h5" stroke="#3c3c44"/></svg>
<span class="t" style="left:24.2px;top:541.1px;font-size:11px;line-height:11px;letter-spacing:0.274px;color:#6e7079;">Tool</span>
<div style="position:absolute;left:22px;top:573px;width:236px;height:1px;background:#d3deec"></div>
<div style="position:absolute;left:162px;top:557px;width:1px;height:17px;background:#d3deec"></div>
<span class="t" style="left:24.2px;top:560.6px;font-size:11px;line-height:11px;letter-spacing:0.129px;color:#101018;">Tool Diameter</span>
<svg style="position:absolute;left:145.7px;top:557.8px" width="15" height="15" viewBox="0 0 15 15"><circle cx="7.5" cy="7.5" r="6" fill="#fff" stroke="#3aa52c" stroke-width="2.2"/><path d="M3.6,7.5 h5" stroke="#3aa52c" stroke-width="2"/><path d="M7.4,4 l4,3.5 l-4,3.5z" fill="#3aa52c"/></svg>
<span class="t" style="left:164.6px;top:560.6px;font-size:11px;line-height:11px;letter-spacing:-0.417px;color:#101018;">2</span>
<div style="position:absolute;left:22px;top:590.5px;width:236px;height:1px;background:#d3deec"></div>
<div style="position:absolute;left:162px;top:574px;width:1px;height:17.5px;background:#d3deec"></div>
<span class="t" style="left:24.2px;top:577.6px;font-size:11px;line-height:11px;letter-spacing:0.105px;color:#101018;">Tool Number</span>
<svg style="position:absolute;left:145.7px;top:575.05px" width="15" height="15" viewBox="0 0 15 15"><circle cx="7.5" cy="7.5" r="6" fill="#f2f2f2" stroke="#c9c9c9" stroke-width="2"/><path d="M11.4,7.5 h-5" stroke="#cfcfcf" stroke-width="2"/><path d="M7.6,4 l-4,3.5 l4,3.5z" fill="#cfcfcf"/></svg>
<span class="t" style="left:166.3px;top:577.6px;font-size:11px;line-height:11px;letter-spacing:-0.917px;color:#8a8a90;font-style:italic;">0</span>
<div style="position:absolute;left:8px;top:737px;width:250px;height:5.5px;background:#f0f0f0"></div>
<div style="position:absolute;left:259px;top:79px;width:3.2px;height:662px;background:#a2a2a2"></div>
<div style="position:absolute;left:262px;top:710px;width:754px;height:3px;background:#a2a2a2"></div>
<div style="position:absolute;left:262px;top:713px;width:754px;height:27.5px;background:#fff"></div>
<div style="position:absolute;left:259px;top:740.5px;width:757px;height:2px;background:#f0f0f0"></div>
<svg id="view" style="position:absolute;left:262px;top:79px" width="754" height="631" viewBox="262 79 754 631"><rect x="262" y="79" width="754" height="631" fill="#31313b"/><g fill="none" stroke="#1fa51f" stroke-width="1.15">
<path id="il" d="M605.0,304.8l2.5,-0.5 2.5,-0.4 2.6,-0.3 2.5,-0.2 2.6,-0.1 2.6,-0.1 2.6,0 2.6,0.1 2.7,0.1 2.6,0.2 2.6,0.3 2.6,0.4 2.6,0.4 2.6,0.6 2.6,0.5 2.6,0.7 2.5,0.7 2.5,0.8 2.5,0.9 2.5,0.9 2.4,1 2.4,1.1 2.4,1.1 2.3,1.2 2.3,1.3 2.2,1.3 2.2,1.4 2.1,1.4 2.1,1.5 2,1.5 2,1.6 1.9,1.6 1.8,1.7 1.8,1.7 1.7,1.8 1.6,1.8 1.5,1.9 1.5,1.8 1.4,2 1.3,1.9 1.3,2 1.1,2 1.1,2 1,2.1 0.9,2.1 0.8,2 0.8,2.1 0.6,2.2 0.6,2.1 0.5,2.1 0.3,2.1 0.3,2.2 0.2,2.1 0.1,2.1 0,2.2 0,2.1 -0.2,2.1 -0.3,2.1 -0.3,2.1 -0.5,2 -0.5,2 -0.6,2 -0.7,2 -0.8,2 -0.9,1.9 -1,1.9 -1,1.8 -1.2,1.8 -1.2,1.8 -1.3,1.7 -1.4,1.7 -1.4,1.7 -1.5,1.6 -1.6,1.5 -1.7,1.5 -1.8,1.4 -1.8,1.4 -1.8,1.3 -2,1.3 -2,1.2 -2,1.1 -2.2,1.1 -2.1,1 -2.2,0.9 -2.3,0.9 -2.3,0.8 -2.4,0.7 -2.3,0.7 -2.5,0.6 -2.4,0.5 -2.5,0.4 -2.5,0.4 -2.6,0.3 -2.5,0.2 -2.6,0.2 -2.6,0.1 -2.6,0 -2.6,-0.1 -2.6,-0.2 -2.7,-0.2 -2.6,-0.3 -2.6,-0.4 -2.6,-0.4 -2.6,-0.5 -2.6,-0.6 -2.5,-0.7 -2.6,-0.7 -2.5,-0.8 -2.5,-0.8 -2.5,-1 -2.4,-1 -2.4,-1 -2.4,-1.2 -2.3,-1.2 -2.3,-1.2 -2.2,-1.3 -2.2,-1.4 -2.1,-1.4 -2.1,-1.5 -2,-1.6 -2,-1.5 -1.8,-1.7 -1.9,-1.7 -1.7,-1.7 -1.7,-1.8 -1.7,-1.8 -1.5,-1.8 -1.5,-1.9 -1.4,-1.9 -1.3,-2 -1.3,-1.9 -1.1,-2 -1.1,-2.1 -1,-2 -0.9,-2.1 -0.8,-2.1 -0.8,-2.1 -0.6,-2.1 -0.6,-2.1 -0.4,-2.2 -0.4,-2.1 -0.3,-2.1 -0.2,-2.2 -0.1,-2.1 0,-2.1 0.1,-2.1 0.1,-2.1 0.3,-2.1 0.3,-2.1 0.5,-2.1 0.5,-2 0.6,-2 0.7,-2 0.8,-1.9 0.9,-2 1,-1.8 1,-1.9 1.2,-1.8 1.2,-1.8 1.3,-1.7 1.4,-1.7 1.4,-1.6 1.6,-1.6 1.6,-1.6 1.6,-1.4 1.8,-1.5 1.8,-1.3 1.9,-1.4 1.9,-1.2 2,-1.2 2.1,-1.1 2.1,-1.1 2.1,-1 2.3,-1 2.2,-0.8 2.3,-0.8 2.4,-0.8 2.4,-0.6 2.4,-0.6 2.4,-0.5z"/>
<use href="#il" x="-0.94" y="3.78"/>
<use href="#il" x="-1.87" y="7.56"/>
<use href="#il" x="-2.81" y="11.34"/>
<use href="#il" x="-3.75" y="15.12"/>
<use href="#il" x="-4.68" y="18.90"/>
<use href="#il" x="-5.62" y="22.68"/>
<use href="#il" x="-6.56" y="26.46"/>
<use href="#il" x="-7.49" y="30.24"/>
<use href="#il" x="-8.43" y="34.02"/>
<use href="#il" x="-9.37" y="37.80"/>
<use href="#il" x="-10.30" y="41.58"/>
<use href="#il" x="-11.24" y="45.36"/>
<use href="#il" x="-12.18" y="49.14"/>
<path d="M591.9,357.7l2.5,-0.5 2.5,-0.3 2.6,-0.3 2.5,-0.3 2.6,-0.1 2.6,-0.1 2.6,0 2.6,0.1 2.6,0.1 2.7,0.3 2.6,0.2 2.6,0.4 2.6,0.5 2.6,0.5 2.6,0.6 2.6,0.6 2.5,0.7 2.5,0.8 2.5,0.9 2.5,0.9 2.4,1 2.4,1.1 2.4,1.1 2.3,1.2 2.3,1.3 2.2,1.3 2.2,1.4 2.1,1.4 2.1,1.5 2,1.5 2,1.6 1.9,1.6 1.8,1.7 1.8,1.7 1.6,1.8 1.7,1.8 1.5,1.9 1.5,1.9 1.4,1.9 1.3,1.9 1.3,2 1.1,2 1.1,2 1,2.1 0.9,2.1 0.8,2.1 0.8,2.1 0.6,2.1 0.6,2.1 0.4,2.1 0.4,2.2 0.3,2.1 0.2,2.1 0.1,2.2 0,2.1 -0.1,2.1 -0.1,2.1 -0.3,2.1 -0.3,2.1 -0.5,2 -0.5,2.1 -0.6,2 -0.7,1.9 -0.8,2 -0.9,1.9 -1,1.9 -1,1.9 -1.2,1.8 -1.2,1.7 -1.3,1.8 -1.4,1.7 -1.4,1.6 -1.6,1.6 -1.6,1.5 -1.6,1.5 -1.8,1.4 -1.8,1.4 -1.9,1.3 -1.9,1.3 -2,1.2 -2.1,1.1 -2.1,1.1 -2.1,1 -2.2,0.9 -2.3,0.9 -2.3,0.8 -2.4,0.7 -2.4,0.7 -2.4,0.6 -2.4,0.5 -2.5,0.4 -2.5,0.4 -2.6,0.3 -2.5,0.2 -2.6,0.2 -2.6,0.1 -2.6,0 -2.6,-0.1 -2.6,-0.1 -2.7,-0.3 -2.6,-0.3 -2.6,-0.3 -2.6,-0.5 -2.6,-0.5 -2.6,-0.6 -2.6,-0.6 -2.5,-0.8 -2.5,-0.8 -2.5,-0.8 -2.5,-1 -2.4,-1 -2.4,-1 -2.4,-1.2 -2.3,-1.2 -2.3,-1.2 -2.2,-1.3 -2.2,-1.4 -2.1,-1.4 -2.1,-1.5 -2,-1.5 -2,-1.6 -1.9,-1.7 -1.8,-1.6 -1.8,-1.8 -1.6,-1.7 -1.7,-1.8 -1.5,-1.9 -1.5,-1.9 -1.4,-1.9 -1.3,-1.9 -1.3,-2 -1.1,-2 -1.1,-2.1 -1,-2 -0.9,-2.1 -0.8,-2.1 -0.8,-2.1 -0.6,-2.1 -0.6,-2.1 -0.4,-2.1 -0.4,-2.2 -0.3,-2.1 -0.2,-2.2 -0.1,-2.1 0,-2.1 0.1,-2.1 0.1,-2.1 0.3,-2.1 0.3,-2.1 0.5,-2 0.5,-2.1 0.6,-2 0.7,-2 0.8,-1.9 0.9,-1.9 1,-1.9 1,-1.9 1.2,-1.8 1.2,-1.8 1.3,-1.7 1.4,-1.7 1.4,-1.6 1.6,-1.6 1.6,-1.5 1.6,-1.5 1.8,-1.4 1.8,-1.4 1.9,-1.3 1.9,-1.3 2,-1.2 2,-1.1 2.2,-1.1 2.1,-1 2.2,-0.9 2.3,-0.9 2.3,-0.8 2.4,-0.7 2.3,-0.7 2.5,-0.6 2.4,-0.5z"/>
<path d="M591.0,361.5l2.5,-0.5 2.5,-0.4 2.5,-0.3 2.6,-0.2 2.6,-0.1 2.6,-0.1 2.6,0 2.6,0.1 2.6,0.1 2.6,0.2 2.6,0.3 2.7,0.4 2.6,0.4 2.6,0.6 2.6,0.5 2.5,0.7 2.6,0.7 2.5,0.8 2.5,0.9 2.4,0.9 2.5,1 2.4,1.1 2.3,1.1 2.4,1.2 2.2,1.3 2.3,1.3 2.2,1.4 2.1,1.4 2.1,1.5 2,1.5 1.9,1.6 1.9,1.6 2.2,0.2 2.2,0 1.5,2.5 1.2,3.6 1.4,2.6 1.5,1.8 1.4,2 1.3,1.9 1.2,2 1.2,2 1.1,2 1,2.1 0.9,2 0.8,2.1 0.7,2.1 0.7,2.2 0.5,2.1 0.5,2.1 0.4,2.1 0.3,2.2 0.2,2.1 0.1,2.1 0,2.2 -0.1,2.1 -0.2,2.1 -0.2,2.1 -0.4,2.1 -0.4,2 -0.5,2 -0.7,2 -0.7,2 -0.8,2 -0.9,1.9 -0.9,1.9 -1.1,1.8 -1.1,1.8 -1.2,1.8 -1.3,1.7 -1.4,1.7 -1.5,1.7 -1.5,1.6 -1.6,1.5 -1.7,1.5 -1.7,1.4 -1.8,1.4 -1.9,1.3 -1.9,1.3 -2,1.2 -2.1,1.1 -2.1,1.1 -2.2,1 -2.2,0.9 -2.2,0.9 -2.4,0.8 -2.3,0.7 -2.4,0.7 -2.4,0.6 -2.5,0.5 -2.5,0.4 -2.5,0.4 -2.5,0.3 -2.6,0.2 -2.6,0.2 -2.3,-1.1 -2.1,-1.8 -2.7,0 -3,1.7 -2.9,0.8 -2.6,-0.3 -2.6,-0.4 -2.6,-0.4 -2.6,-0.5 -2.6,-0.6 -2.6,-0.7 -2.5,-0.7 -2.6,-0.8 -2.5,-0.8 -2.4,-1 -2.5,-1 -2.4,-1 -2.3,-1.2 -2.3,-1.2 -2.3,-1.2 -2.2,-1.3 -2.2,-1.4 -2.2,-1.4 -2,-1.5 -2,-1.6 -2,-1.5 -1.9,-1.7 -1.8,-1.7 -1.8,-1.7 -1.7,-1.8 -1.6,-1.8 -1.6,-1.8 -1.4,-1.9 -1.4,-1.9 -1.4,-2 -1.2,-1.9 -1.2,-2.1 -1,-2 -1,-2 -0.9,-2.1 -0.9,-2.1 -0.7,-2.1 -0.7,-2.1 -0.5,-2.1 -0.5,-2.2 -0.4,-2.1 -0.2,-2.1 -0.2,-2.2 -0.1,-2.1 -0.1,-2.1 0.1,-2.1 0.2,-2.1 0.2,-2.1 0.4,-2.1 0.4,-2.1 0.6,-2 0.6,-2 0.7,-2 0.8,-1.9 0.9,-2 0.9,-1.8 1.1,-1.9 1.1,-1.8 1.3,-1.8 1.3,-1.7 1.4,-1.8 1.9,-3.4 1.9,-3.4 1.2,0.1 1.3,0.3 1.6,-1.2 1.8,-1.3 1.9,-1.4 2,-1.2 2,-1.2 2,-1.1 2.1,-1.1 2.2,-1 2.2,-1 2.3,-0.8 2.3,-0.8 2.3,-0.8 2.4,-0.6 2.4,-0.6 2.5,-0.5z"/>
<path d="M590.1,365.2l2.4,-0.4 2.6,-0.4 2.5,-0.3 2.6,-0.2 2.5,-0.1 2.6,-0.1 2.6,0 2.7,0 2.6,0.2 2.6,0.2 2.6,0.3 2.6,0.4 2.6,0.4 2.6,0.5 2.6,0.6 2.6,0.7 2.5,0.7 2.5,0.8 2.5,0.9 2.5,0.9 2.4,1 2.4,1.1 2.4,1.1 2.3,1.2 2.3,1.2 2.2,1.4 2.2,1.3 2.1,1.5 2.1,1.4 2,1.6 2.4,-0.1 2.3,-0.2 2.3,-0.1 2.2,0 1.5,2.5 1.2,3.6 1.1,3.6 1.1,3.7 1.1,2.8 1.4,2 1.2,2 1.2,2 1,2 1,2.1 0.9,2 0.9,2.1 0.7,2.1 0.6,2.1 0.6,2.2 0.5,2.1 0.3,2.1 0.3,2.2 0.2,2.1 0.1,2.1 0.1,2.1 -0.1,2.2 -0.2,2.1 -0.3,2.1 -0.3,2 -0.4,2.1 -0.6,2 -0.6,2 -0.7,2 -0.8,2 -0.9,1.9 -1,1.9 -1,1.8 -1.1,1.8 -1.3,1.8 -1.3,1.7 -1.3,1.7 -1.5,1.6 -1.5,1.6 -1.6,1.6 -1.7,1.5 -1.7,1.4 -1.9,1.4 -1.8,1.3 -2,1.2 -2,1.2 -2,1.2 -2.1,1 -2.2,1 -2.2,1 -2.3,0.9 -2.3,0.8 -2.3,0.7 -2.4,0.6 -2.4,0.6 -2.5,0.6 -2.5,0.4 -2.5,0.4 -2.6,0.3 -2.2,-1.1 -2.1,-1.7 -2.2,-1.7 -2.1,-1.8 -2.7,0 -3,1.7 -3.1,1.6 -3.1,1.5 -2.9,0.8 -2.6,-0.4 -2.6,-0.5 -2.6,-0.6 -2.5,-0.7 -2.6,-0.7 -2.5,-0.8 -2.5,-0.9 -2.5,-0.9 -2.4,-1 -2.4,-1.1 -2.4,-1.1 -2.3,-1.2 -2.3,-1.2 -2.2,-1.4 -2.2,-1.3 -2.1,-1.5 -2.1,-1.4 -2,-1.6 -1.9,-1.6 -1.9,-1.6 -1.9,-1.7 -1.7,-1.7 -1.7,-1.8 -1.6,-1.8 -1.6,-1.8 -1.5,-1.9 -1.4,-1.9 -1.3,-2 -1.2,-2 -1.2,-2 -1.1,-2 -1,-2.1 -0.9,-2 -0.8,-2.1 -0.7,-2.1 -0.7,-2.1 -0.5,-2.2 -0.5,-2.1 -0.4,-2.1 -0.3,-2.2 -0.2,-2.1 -0.1,-2.1 0,-2.1 0.1,-2.2 0.1,-2.1 0.3,-2.1 0.4,-2 0.4,-2.1 0.5,-2 0.7,-2 0.7,-2 0.8,-2 0.8,-1.9 1,-1.9 1.1,-1.8 1.1,-1.8 1.3,-2.1 1.7,-3.5 1.9,-3.5 1.9,-3.4 1.9,-3.4 1.2,0.1 1.3,0.3 1.3,0.4 1.3,0.4 1.8,-0.9 1.9,-1.2 2,-1.2 2.1,-1.2 2.1,-1 2.2,-1 2.2,-1 2.2,-0.8 2.3,-0.9 2.4,-0.7 2.4,-0.6 2.4,-0.6 2.5,-0.6z"/>
<path d="M589.1,369.0l2.5,-0.4 2.5,-0.4 2.6,-0.3 2.5,-0.2 2.6,-0.2 2.6,0 2.6,0 2.6,0 2.6,0.2 2.7,0.2 2.6,0.3 2.6,0.4 2.6,0.4 2.6,0.5 2.6,0.6 2.5,0.7 2.6,0.7 2.5,0.8 2.5,0.9 2.5,0.9 2.4,1 2.4,1.1 2.4,1.1 2.3,1.2 2.3,1.2 2.2,1.3 2.2,1.4 2.1,1.4 2.5,-0.4 2.5,-0.2 2.4,-0.2 2.3,-0.2 2.3,-0.1 2.2,0 1.5,2.5 1.2,3.6 1.1,3.6 1.1,3.7 0.9,3.7 0.9,3.8 1,3 1.1,2.1 1.1,2 1,2 0.9,2.1 0.8,2.1 0.8,2.1 0.6,2.1 0.6,2.1 0.4,2.2 0.4,2.1 0.3,2.1 0.2,2.2 0.1,2.1 0,2.1 -0.1,2.1 -0.1,2.1 -0.3,2.1 -0.3,2.1 -0.5,2.1 -0.5,2 -0.6,2 -0.7,2 -0.8,1.9 -0.9,2 -1,1.8 -1,1.9 -1.2,1.8 -1.2,1.8 -1.3,1.7 -1.4,1.7 -1.4,1.6 -1.6,1.6 -1.6,1.6 -1.6,1.4 -1.8,1.5 -1.8,1.3 -1.9,1.4 -1.9,1.2 -2,1.2 -2.1,1.1 -2.1,1.1 -2.1,1 -2.3,1 -2.2,0.8 -2.3,0.8 -2.4,0.8 -2.4,0.6 -2.4,0.6 -2.4,0.5 -2.5,0.5 -2.2,-1.2 -2.1,-1.5 -2.1,-1.5 -2.1,-1.7 -2.2,-1.7 -2.1,-1.8 -2.7,0 -3,1.7 -3.1,1.6 -3.1,1.5 -3,1.4 -3.1,1.3 -2.9,0.9 -2.6,-0.5 -2.6,-0.7 -2.5,-0.7 -2.5,-0.8 -2.5,-0.9 -2.5,-0.9 -2.4,-1 -2.4,-1.1 -2.4,-1.1 -2.3,-1.2 -2.3,-1.3 -2.2,-1.3 -2.2,-1.4 -2.1,-1.4 -2.1,-1.5 -2,-1.5 -2,-1.6 -1.9,-1.6 -1.8,-1.7 -1.8,-1.7 -1.7,-1.8 -1.6,-1.8 -1.5,-1.9 -1.5,-1.8 -1.4,-2 -1.3,-1.9 -1.3,-2 -1.1,-2 -1.1,-2 -1,-2.1 -0.9,-2 -0.8,-2.1 -0.8,-2.1 -0.6,-2.2 -0.6,-2.1 -0.5,-2.1 -0.3,-2.1 -0.3,-2.2 -0.2,-2.1 -0.1,-2.1 0,-2.2 0,-2.1 0.2,-2.1 0.3,-2.1 0.3,-2 0.5,-2.1 0.5,-2 0.6,-2 0.7,-2 0.8,-2 0.9,-1.9 1,-1.9 1.2,-2.4 1.5,-3.6 1.7,-3.5 1.7,-3.5 1.9,-3.5 1.9,-3.4 1.9,-3.4 1.2,0.1 1.3,0.3 1.3,0.4 1.3,0.4 1.5,0.4 1.4,0.6 1.9,-0.6 2,-1.1 2.2,-1.1 2.1,-1 2.2,-0.9 2.3,-0.9 2.3,-0.8 2.4,-0.7 2.3,-0.7 2.5,-0.6 2.4,-0.5z"/>
<path d="M588.2,372.8l2.5,-0.4 2.5,-0.4 2.5,-0.3 2.6,-0.2 2.6,-0.2 2.6,-0.1 2.6,0 2.6,0.1 2.6,0.2 2.6,0.2 2.6,0.3 2.7,0.3 2.6,0.5 2.6,0.5 2.5,0.6 2.6,0.6 2.6,0.8 2.5,0.8 2.5,0.8 2.4,1 2.5,1 2.4,1 2.3,1.2 2.4,1.2 2.2,1.2 2.3,1 2.7,-0.4 2.5,-0.3 2.5,-0.4 2.5,-0.2 2.4,-0.2 2.3,-0.2 2.3,-0.1 2.2,0 1.5,2.5 1.2,3.6 1.1,3.6 1.1,3.7 0.9,3.7 0.9,3.8 0.8,3.7 0.7,3.8 0.8,3.4 1,2 0.9,2.1 0.8,2.1 0.7,2.1 0.7,2.1 0.5,2.1 0.5,2.2 0.4,2.1 0.3,2.1 0.2,2.2 0.1,2.1 0,2.1 -0.1,2.1 -0.2,2.1 -0.2,2.1 -0.4,2.1 -0.4,2 -0.6,2.1 -0.6,2 -0.7,2 -0.8,1.9 -0.9,1.9 -0.9,1.9 -1.1,1.9 -1.1,1.8 -1.2,1.8 -1.3,1.7 -1.4,1.7 -1.5,1.6 -1.5,1.6 -1.6,1.5 -1.7,1.5 -1.7,1.5 -1.8,1.3 -1.9,1.3 -1.9,1.3 -2,1.2 -2.1,1.1 -2.1,1.1 -2.2,1 -2.2,0.9 -2.3,0.9 -2.3,0.8 -2.3,0.7 -2.4,0.7 -2.4,0.6 -2.1,-1.2 -2,-1.4 -2.1,-1.4 -2.1,-1.5 -2.1,-1.5 -2.1,-1.7 -2.2,-1.7 -2.1,-1.8 -2.7,0 -3,1.7 -3.1,1.6 -3.1,1.5 -3,1.4 -3.1,1.3 -3,1.3 -3,1.2 -3,1 -2.5,-0.7 -2.6,-0.8 -2.5,-0.9 -2.4,-0.9 -2.5,-1 -2.4,-1.1 -2.3,-1.1 -2.4,-1.2 -2.2,-1.3 -2.3,-1.3 -2.1,-1.4 -2.2,-1.4 -2,-1.5 -2.1,-1.5 -1.9,-1.6 -1.9,-1.6 -1.8,-1.7 -1.8,-1.7 -1.7,-1.8 -1.6,-1.8 -1.6,-1.9 -1.4,-1.9 -1.4,-1.9 -1.4,-1.9 -1.2,-2 -1.2,-2 -1.1,-2 -0.9,-2.1 -1,-2.1 -0.8,-2.1 -0.7,-2.1 -0.7,-2.1 -0.5,-2.1 -0.5,-2.1 -0.4,-2.2 -0.3,-2.1 -0.2,-2.1 -0.1,-2.2 0,-2.1 0.1,-2.1 0.2,-2.1 0.2,-2.1 0.4,-2.1 0.4,-2 0.6,-2.1 0.6,-2 0.7,-1.9 0.8,-2 1,-2.6 1.5,-3.7 1.5,-3.7 1.5,-3.6 1.7,-3.5 1.7,-3.5 1.9,-3.5 1.9,-3.4 1.9,-3.4 1.2,0.1 1.3,0.3 1.3,0.4 1.3,0.4 1.5,0.4 1.4,0.6 1.6,0.6 1.6,0.6 1.9,-0.2 2.2,-1 2.2,-0.9 2.3,-0.9 2.3,-0.8 2.3,-0.7 2.4,-0.7 2.4,-0.6 2.5,-0.5z"/>
<path d="M587.2,376.6l2.5,-0.5 2.6,-0.3 2.5,-0.3 2.6,-0.3 2.5,-0.1 2.6,-0.1 2.6,0 2.6,0.1 2.7,0.1 2.6,0.3 2.6,0.2 2.6,0.4 2.6,0.5 2.6,0.5 2.6,0.6 2.6,0.6 2.5,0.7 2.5,0.8 2.5,0.9 2.5,0.9 2.4,1 2.4,1.1 2.4,1.1 2.4,0.8 2.8,-0.6 2.6,-0.5 2.7,-0.4 2.5,-0.3 2.5,-0.4 2.5,-0.2 2.4,-0.2 2.3,-0.2 2.3,-0.1 2.2,0 1.5,2.5 1.2,3.6 1.1,3.6 1.1,3.7 0.9,3.7 0.9,3.8 0.8,3.7 0.7,3.8 0.6,3.9 0.6,3.8 0.5,3.6 0.8,2.1 0.8,2.1 0.6,2.1 0.6,2.1 0.5,2.1 0.3,2.2 0.3,2.1 0.2,2.1 0.1,2.2 0,2.1 0,2.1 -0.2,2.1 -0.3,2.1 -0.3,2.1 -0.5,2 -0.5,2.1 -0.6,2 -0.7,1.9 -0.8,2 -0.9,1.9 -1,1.9 -1,1.9 -1.2,1.8 -1.2,1.7 -1.3,1.8 -1.4,1.7 -1.4,1.6 -1.5,1.6 -1.6,1.5 -1.7,1.5 -1.8,1.4 -1.8,1.4 -1.8,1.3 -2,1.3 -2,1.2 -2,1.1 -2.1,1.1 -2.2,1 -2.2,0.9 -2.3,0.9 -2.3,0.8 -2.3,0.6 -2,-1.1 -1.9,-1.2 -2.1,-1.3 -2,-1.4 -2.1,-1.4 -2.1,-1.5 -2.1,-1.5 -2.1,-1.7 -2.2,-1.7 -2.1,-1.8 -2.7,0 -3,1.7 -3.1,1.6 -3.1,1.5 -3,1.4 -3.1,1.3 -3,1.3 -3,1.2 -3,1.1 -3,1.1 -3,1 -2.5,-0.8 -2.5,-1 -2.4,-1 -2.4,-1 -2.4,-1.2 -2.3,-1.2 -2.3,-1.2 -2.2,-1.3 -2.2,-1.4 -2.1,-1.4 -2.1,-1.5 -2,-1.5 -1.9,-1.6 -1.9,-1.7 -1.9,-1.6 -1.7,-1.8 -1.7,-1.7 -1.7,-1.8 -1.5,-1.9 -1.5,-1.9 -1.4,-1.9 -1.3,-1.9 -1.3,-2 -1.1,-2 -1.1,-2.1 -1,-2 -0.9,-2.1 -0.8,-2.1 -0.8,-2.1 -0.6,-2.1 -0.6,-2.1 -0.4,-2.1 -0.4,-2.2 -0.3,-2.1 -0.2,-2.2 -0.1,-2.1 0,-2.1 0.1,-2.1 0.1,-2.1 0.3,-2.1 0.3,-2.1 0.5,-2 0.5,-2.1 0.6,-2 1,-2.9 1.2,-3.7 1.3,-3.7 1.5,-3.7 1.5,-3.7 1.5,-3.6 1.7,-3.5 1.7,-3.5 1.9,-3.5 1.9,-3.4 1.9,-3.4 1.2,0.1 1.3,0.3 1.3,0.4 1.3,0.4 1.5,0.4 1.4,0.6 1.6,0.6 1.6,0.6 1.7,0.8 1.7,0.7 2,0.2 2.2,-0.9 2.3,-0.8 2.4,-0.7 2.4,-0.7 2.4,-0.6 2.4,-0.5z"/>
<path d="M583.7,356.3 L615.1,325.1 L560.2,286.9 L528.8,318.2 z"/>
<path d="M642.6,326.7 L676.8,362.0 L728.8,330.3 L694.5,295.1 z"/>
<path d="M659.5,394.4 L607.2,393.0 L612.4,448.8 L664.7,450.3 z"/>
</g>
<path d="M610.1,313.4l3.1,-0.5 3.1,-0.4 3.1,-0.2 3.2,-0.2 3.2,0.1 3.2,0.1 3.2,0.3 3.2,0.4 3.2,0.6 3.2,0.7 3.1,0.8 3.2,1 3,1.1 3,1.2 2.9,1.3 2.9,1.5 2.8,1.5 2.7,1.7 2.6,1.8 2.5,1.8 2.3,2 2.3,2 2.1,2.2 2.1,2.2 1.8,2.3 1.8,2.3 1.6,2.4 1.4,2.5 1.3,2.5 1.2,2.5 1,2.6 0.8,2.6 0.6,2.6 0.5,2.6 0.4,2.6 0.1,2.6 0,2.6 -0.2,2.6 -0.3,2.6 -0.5,2.5 -0.7,2.5 -0.9,2.4 -1,2.4 -1.1,2.3 -1.3,2.3 -1.5,2.2 -1.6,2.1 -1.8,2 -1.9,1.9 -2,1.9 -2.2,1.7 -2.3,1.7 -2.4,1.5 -2.5,1.4 -2.6,1.3 -2.7,1.2 -2.8,1 -2.8,0.9 -3,0.8 -3,0.7 -3.1,0.5 -3.1,0.4 -3.1,0.2 -3.2,0.2 -3.2,-0.1 -3.2,-0.1 -3.2,-0.3 -3.2,-0.4 -3.2,-0.6 -3.2,-0.7 -3.1,-0.8 -3.2,-1 -3,-1.1 -3,-1.2 -2.9,-1.3 -2.9,-1.5 -2.8,-1.5 -2.7,-1.7 -2.6,-1.8 -2.5,-1.8 -2.3,-2 -2.3,-2 -2.1,-2.2 -2.1,-2.2 -1.8,-2.3 -1.8,-2.3 -1.6,-2.4 -1.4,-2.5 -1.3,-2.5 -1.2,-2.5 -1,-2.6 -0.8,-2.6 -0.6,-2.6 -0.5,-2.6 -0.4,-2.6 -0.1,-2.6 0,-2.6 0.2,-2.6 0.3,-2.6 0.5,-2.5 0.7,-2.5 0.9,-2.4 1,-2.4 1.1,-2.3 1.3,-2.3 1.5,-2.2 1.6,-2.1 1.8,-2 1.9,-1.9 2,-1.9 2.2,-1.7 2.3,-1.7 2.4,-1.5 2.5,-1.4 2.6,-1.3 2.7,-1.2 2.8,-1 2.8,-0.9 3,-0.8 3,-0.7z" fill="none" stroke="#c9c322" stroke-width="2"/>
<rect x="578.7" y="325.5" width="5" height="5" fill="#1fa51f"/>
<rect x="674.4" y="331.4" width="5" height="5" fill="#1fa51f"/>
<rect x="632.6" y="409.7" width="5" height="5" fill="#1fa51f"/>
<g fill="none" stroke="#16d916" stroke-width="1.65" stroke-linejoin="round">
<path id="ol" d="M692.5,586.2l0.8,2.3 1.2,2.2 1.5,2.1 1.9,1.9 2.1,1.7 2.4,1.4 2.6,1.2 2.7,0.9 2.8,0.6 2.9,0.2 2.8,-0.1 2.7,-0.4 2.7,-0.4 2.7,-0.5 2.7,-0.6 2.7,-0.5 2.7,-0.6 2.6,-0.5 2.6,-0.7 2.4,-1.1 2.2,-1.3 1.9,-1.5 1.5,-1.8 1.2,-2 0.8,-2.1 0.5,-2.3 0,-2.3 -0.4,-2.3 -0.9,-2.3 -1.1,-2.2 -1.3,-2.1 -0.5,-2.3 0.5,-2.3 1.5,-1.8 2.2,-1.1 2.8,-0.4 2.8,0.5 2.5,1.3 1.8,1.9 1.3,2.2 1.4,2.1 1.8,2 2,1.7 2.3,1.6 2.6,1.3 2.6,1 2.8,0.7 2.9,0.3 2.8,0 2.8,-0.3 2.6,-0.6 2.5,-1 2.3,-1 2.4,-1.1 2.4,-1 2.3,-1.1 2.4,-1.2 2.3,-1.1 2.2,-1.2 2,-1.5 1.7,-1.7 1.3,-1.9 0.9,-2.1 0.6,-2.2 0.1,-2.3 -0.2,-2.3 -0.7,-2.3 -1,-2.2 -1.5,-2.2 -1.7,-1.9 -1.9,-1.9 -1.4,-2.1 -0.4,-2.3 0.6,-2.2 1.6,-1.8 2.4,-1 2.7,-0.3 2.8,0.7 2.5,1.3 1.9,1.9 2,1.8 2.2,1.7 2.4,1.3 2.7,1.1 2.7,0.8 2.9,0.5 2.8,0.2 2.8,-0.2 2.7,-0.6 2.5,-0.8 2.3,-1.1 2.1,-1.5 1.9,-1.5 1.9,-1.6 1.8,-1.5 1.9,-1.6 1.8,-1.6 1.8,-1.6 1.8,-1.7 1.4,-1.9 1.1,-2 0.7,-2.2 0.3,-2.2 -0.1,-2.3 -0.6,-2.3 -0.9,-2.3 -1.3,-2.2 -1.6,-2 -2,-1.8 -2.2,-1.6 -2.4,-1.5 -2.1,-1.7 -1.3,-2.2 -0.3,-2.3 0.8,-2.1 1.8,-1.7 2.4,-1 2.8,-0.1 2.7,0.7 2.5,1.4 2.4,1.5 2.6,1.2 2.7,0.9 2.8,0.5 2.8,0.3 2.9,-0.1 2.7,-0.4 2.6,-0.7 2.4,-1 2.1,-1.4 1.9,-1.5 1.5,-1.9 1.3,-1.9 1.3,-1.9 1.2,-2 1.3,-2 1.2,-1.9 1.1,-2 1.2,-2 0.8,-2.2 0.4,-2.2 0.1,-2.3 -0.4,-2.3 -0.8,-2.3 -1.2,-2.2 -1.5,-2.1 -1.9,-1.9 -2.1,-1.7 -2.4,-1.5 -2.6,-1.1 -2.7,-1 -2.6,-1.2 -2,-1.8 -1.1,-2.2 -0.2,-2.3 1,-2 1.8,-1.6 2.5,-0.9 2.8,0 2.8,0.8 2.7,0.9 2.8,0.7 2.8,0.4 2.8,0.1 2.8,-0.3 2.6,-0.7 2.5,-0.9 2.2,-1.2 2,-1.5 1.6,-1.7 1.3,-2 0.9,-2.1 0.7,-2.2 0.5,-2.2 0.6,-2.2 0.5,-2.2 0.5,-2.2 0.5,-2.3 0.4,-2.2 0.2,-2.3 -0.2,-2.3 -0.7,-2.3 -1,-2.2 -1.4,-2.2 -1.8,-1.9 -2,-1.8 -2.3,-1.6 -2.5,-1.2 -2.7,-1 -2.8,-0.7 -2.9,-0.4 -2.8,-0.5 -2.5,-1.3 -1.9,-1.8 -1,-2.3 0,-2.2 1,-2.1 2,-1.5 2.5,-0.7 2.9,0.1 2.8,0.3 2.8,0.2 2.8,-0.2 2.7,-0.5 2.6,-0.8 2.3,-1.1 2,-1.4 1.8,-1.7 1.4,-1.9 1.1,-2 0.6,-2.2 0.3,-2.3 -0.1,-2.3 -0.2,-2.3 -0.2,-2.3 -0.2,-2.3 -0.2,-2.3 -0.3,-2.4 -0.2,-2.3 -0.6,-2.3 -0.9,-2.2 -1.2,-2.2 -1.7,-2.1 -1.9,-1.8 -2.2,-1.6 -2.5,-1.4 -2.6,-1.1 -2.8,-0.8 -2.8,-0.5 -2.9,-0.1 -2.8,0.2 -2.8,0.1 -2.8,-0.5 -2.4,-1.4 -1.8,-1.9 -0.9,-2.2 0.1,-2.3 1.2,-2 2.1,-1.4 2.6,-0.6 2.8,-0.2 2.7,-0.4 2.6,-0.8 2.4,-1 2.1,-1.3 1.9,-1.6 1.6,-1.8 1.1,-1.9 0.8,-2.2 0.4,-2.2 0,-2.3 -0.4,-2.4 -0.8,-2.2 -0.9,-2.3 -0.9,-2.3 -0.9,-2.2 -1,-2.3 -0.9,-2.2 -1,-2.3 -1.2,-2.2 -1.5,-2.1 -1.9,-1.9 -2.1,-1.7 -2.4,-1.5 -2.6,-1.2 -2.7,-0.9 -2.8,-0.6 -2.8,-0.2 -2.8,0.1 -2.8,0.4 -2.6,0.7 -2.5,0.8 -2.8,0.2 -2.8,-0.7 -2.4,-1.4 -1.7,-2 -0.7,-2.3 0.3,-2.2 1.3,-1.9 2.2,-1.3 2.5,-0.8 2.5,-1 2.2,-1.2 2,-1.5 1.6,-1.7 1.3,-1.9 1,-2.1 0.5,-2.2 0.1,-2.3 -0.2,-2.3 -0.7,-2.3 -1.1,-2.3 -1.4,-2.1 -1.6,-2.1 -1.5,-2 -1.6,-2.1 -1.6,-2 -1.7,-2 -1.6,-2.1 -1.8,-1.9 -2,-1.8 -2.3,-1.6 -2.5,-1.3 -2.7,-1 -2.8,-0.7 -2.8,-0.3 -2.9,-0.1 -2.7,0.3 -2.7,0.6 -2.4,1 -2.3,1.2 -2.1,1.3 -2.4,1 -2.8,0 -2.8,-0.7 -2.3,-1.5 -1.6,-2.1 -0.6,-2.3 0.5,-2.2 1.4,-1.8 2.1,-1.4 2,-1.4 1.8,-1.7 1.4,-1.8 1.1,-2.1 0.7,-2.2 0.3,-2.2 -0.2,-2.3 -0.5,-2.3 -1,-2.3 -1.3,-2.2 -1.6,-2 -2,-1.8 -2.1,-1.7 -2.1,-1.8 -2.2,-1.7 -2.1,-1.7 -2.2,-1.6 -2.2,-1.7 -2.3,-1.6 -2.4,-1.4 -2.6,-1.1 -2.8,-0.8 -2.8,-0.5 -2.9,-0.2 -2.8,0.2 -2.6,0.5 -2.6,0.8 -2.3,1.2 -2.1,1.4 -1.7,1.6 -1.6,1.8 -1.9,1.6 -2.5,0.8 -2.8,-0.1 -2.7,-0.8 -2.2,-1.6 -1.5,-2.1 -0.5,-2.3 0.6,-2.2 1.5,-1.9 1.5,-1.8 1.2,-2 0.8,-2.1 0.4,-2.2 0,-2.3 -0.4,-2.4 -0.8,-2.2 -1.2,-2.2 -1.5,-2.1 -1.9,-1.9 -2.1,-1.7 -2.4,-1.4 -2.6,-1.3 -2.5,-1.3 -2.6,-1.2 -2.5,-1.3 -2.6,-1.2 -2.6,-1.1 -2.6,-1.2 -2.7,-0.9 -2.8,-0.6 -2.9,-0.3 -2.8,0.1 -2.7,0.4 -2.6,0.7 -2.4,1 -2.2,1.3 -1.8,1.6 -1.6,1.8 -1.1,2 -0.9,2.1 -1.2,2 -2,1.4 -2.6,0.7 -2.8,-0.1 -2.7,-1 -2.1,-1.7 -1.3,-2.1 -0.3,-2.3 0.6,-2.2 0.9,-2.1 0.5,-2.2 0.2,-2.3 -0.3,-2.3 -0.6,-2.3 -1.1,-2.3 -1.4,-2.1 -1.8,-1.9 -2,-1.8 -2.4,-1.5 -2.5,-1.3 -2.7,-1 -2.8,-0.7 -2.7,-0.8 -2.8,-0.7 -2.8,-0.6 -2.8,-0.7 -2.8,-0.6 -2.8,-0.6 -2.9,-0.4 -2.8,-0.1 -2.8,0.3 -2.6,0.6 -2.5,0.9 -2.2,1.2 -2,1.5 -1.7,1.8 -1.3,1.9 -0.9,2.1 -0.5,2.2 -0.2,2.3 -0.4,2.2 -1.2,2 -2.1,1.3 -2.6,0.6 -2.9,-0.2 -2.6,-1.1 -2,-1.8 -1.2,-2.2 -0.2,-2.3 0.1,-2.3 -0.1,-2.3 -0.5,-2.3 -0.9,-2.2 -1.3,-2.2 -1.7,-2 -1.9,-1.9 -2.3,-1.6 -2.4,-1.4 -2.7,-1 -2.7,-0.8 -2.9,-0.5 -2.8,-0.2 -2.9,-0.1 -2.8,-0.1 -2.8,-0.1 -2.9,0 -2.8,-0.1 -2.8,0 -2.8,0.2 -2.7,0.5 -2.6,0.8 -2.3,1.1 -2.1,1.4 -1.7,1.6 -1.5,1.9 -1,2 -0.7,2.2 -0.3,2.3 0.2,2.3 0.5,2.3 0.5,2.3 -0.4,2.3 -1.4,1.8 -2.1,1.3 -2.7,0.5 -2.8,-0.4 -2.6,-1.2 -2,-1.8 -1,-2.2 -0.6,-2.3 -0.8,-2.3 -1.2,-2.2 -1.5,-2.1 -1.9,-1.9 -2.1,-1.7 -2.4,-1.5 -2.6,-1.2 -2.7,-0.8 -2.8,-0.6 -2.9,-0.3 -2.8,0.1 -2.7,0.4 -2.7,0.5 -2.7,0.5 -2.7,0.5 -2.7,0.5 -2.6,0.6 -2.7,0.6 -2.6,0.7 -2.4,1 -2.2,1.3 -1.9,1.6 -1.5,1.8 -1.2,1.9 -0.8,2.2 -0.4,2.2 0,2.3 0.4,2.3 0.8,2.3 1.1,2.2 1.3,2.2 0.5,2.3 -0.5,2.2 -1.5,1.8 -2.2,1.2 -2.7,0.3 -2.9,-0.5 -2.5,-1.3 -1.8,-1.9 -1.3,-2.1 -1.4,-2.1 -1.8,-2 -2,-1.8 -2.3,-1.5 -2.5,-1.3 -2.7,-1 -2.8,-0.7 -2.9,-0.4 -2.8,0 -2.7,0.3 -2.7,0.7 -2.4,0.9 -2.4,1 -2.4,1.1 -2.4,1.1 -2.3,1.1 -2.3,1.1 -2.3,1.1 -2.3,1.3 -2,1.4 -1.6,1.7 -1.4,2 -0.9,2 -0.6,2.3 -0.1,2.2 0.2,2.4 0.7,2.3 1.1,2.2 1.4,2.1 1.7,2 1.9,1.9 1.4,2.1 0.5,2.3 -0.7,2.2 -1.6,1.7 -2.4,1.1 -2.7,0.2 -2.8,-0.6 -2.4,-1.4 -2,-1.9 -1.9,-1.8 -2.3,-1.6 -2.4,-1.4 -2.7,-1.1 -2.7,-0.8 -2.8,-0.5 -2.9,-0.1 -2.8,0.2 -2.7,0.5 -2.5,0.8 -2.3,1.2 -2,1.4 -1.9,1.5 -1.9,1.6 -1.9,1.6 -1.9,1.6 -1.8,1.6 -1.8,1.6 -1.7,1.6 -1.5,1.9 -1.1,2 -0.7,2.2 -0.3,2.3 0.2,2.3 0.5,2.3 0.9,2.2 1.3,2.2 1.6,2 2,1.9 2.2,1.6 2.4,1.5 2.1,1.7 1.3,2.1 0.3,2.3 -0.8,2.2 -1.7,1.6 -2.5,1 -2.7,0.1 -2.8,-0.7 -2.5,-1.4 -2.4,-1.4 -2.5,-1.2 -2.8,-0.9 -2.8,-0.6 -2.8,-0.3 -2.8,0.1 -2.8,0.4 -2.5,0.8 -2.4,1 -2.2,1.3 -1.8,1.6 -1.6,1.8 -1.3,1.9 -1.2,2 -1.3,1.9 -1.2,2 -1.2,2 -1.2,2 -1.1,2 -0.9,2.1 -0.4,2.3 0,2.3 0.3,2.3 0.8,2.3 1.2,2.2 1.5,2 1.9,1.9 2.1,1.8 2.4,1.4 2.6,1.2 2.7,1 2.6,1.1 2,1.8 1.2,2.2 0.1,2.3 -0.9,2.1 -1.9,1.6 -2.5,0.8 -2.8,0 -2.7,-0.8 -2.8,-0.9 -2.7,-0.7 -2.9,-0.4 -2.8,0 -2.8,0.3 -2.6,0.6 -2.5,0.9 -2.2,1.3 -2,1.5 -1.6,1.7 -1.3,1.9 -0.9,2.1 -0.6,2.2 -0.6,2.2 -0.6,2.2 -0.5,2.3 -0.5,2.2 -0.5,2.2 -0.4,2.3 -0.2,2.2 0.2,2.4 0.7,2.3 1,2.2 1.4,2.1 1.8,2 2,1.8 2.3,1.5 2.6,1.3 2.6,1 2.8,0.7 2.9,0.4 2.8,0.5 2.5,1.2 2,1.9 1,2.2 -0.1,2.3 -1,2 -2,1.5 -2.5,0.8 -2.8,-0.1 -2.9,-0.4 -2.8,-0.2 -2.8,0.2 -2.7,0.5 -2.5,0.8 -2.4,1.2 -2,1.4 -1.8,1.6 -1.4,1.9 -1,2.1 -0.7,2.1 -0.2,2.3 0,2.3 0.2,2.3 0.2,2.3 0.2,2.4 0.2,2.3 0.3,2.3 0.3,2.3 0.5,2.3 0.9,2.3 1.3,2.2 1.6,2 1.9,1.8 2.3,1.7 2.4,1.4 2.6,1.1 2.8,0.7 2.8,0.5 2.9,0.2 2.8,-0.2 2.8,-0.2 2.8,0.6 2.5,1.3 1.8,1.9 0.8,2.3 -0.1,2.3 -1.2,1.9 -2,1.4 -2.7,0.7 -2.8,0.2 -2.7,0.4 -2.6,0.7 -2.4,1 -2.1,1.3 -1.9,1.6 -1.5,1.8 -1.2,2 -0.8,2.1 -0.4,2.3 0,2.3 0.4,2.3 0.8,2.3 0.9,2.3 0.9,2.2 0.9,2.3 1,2.2 1,2.3 1,2.2 1.1,2.2 1.5,2.1 1.9,1.9 2.1,1.8 2.4,1.4 2.6,1.2 2.7,0.9 2.8,0.6 2.9,0.3 2.8,-0.1 2.7,-0.4 2.6,-0.7 2.5,-0.8 2.8,-0.2 2.8,0.6 2.4,1.4 1.7,2 0.7,2.3 -0.3,2.3 -1.3,1.9 -2.1,1.3 -2.6,0.8 -2.4,0.9 -2.3,1.2 -2,1.5 -1.6,1.7 -1.3,2 -1,2.1 -0.5,2.2 -0.1,2.3 0.3,2.3 0.6,2.3 1.1,2.2 1.4,2.1 1.6,2.1 1.5,2.1 1.6,2 1.7,2.1 1.6,2 1.6,2 1.8,2 2,1.8 2.3,1.5 2.5,1.3 2.7,1 2.8,0.7 2.9,0.4 2.8,0 2.8,-0.3 2.6,-0.6 2.5,-0.9 2.2,-1.2 2.1,-1.4 2.5,-0.9 2.8,-0.1 2.7,0.8 2.3,1.5 1.6,2 0.6,2.3 -0.4,2.2 -1.5,1.9 -2.1,1.4 -2,1.4 -1.8,1.6 -1.4,1.9 -1.1,2 -0.7,2.2 -0.2,2.3 0.1,2.3 0.5,2.3 1,2.3 1.3,2.1 1.7,2 1.9,1.9 2.1,1.7 2.2,1.7 2.1,1.7 2.2,1.7 2.1,1.7 2.2,1.6 2.3,1.7 2.4,1.3 2.7,1.2 2.7,0.8 2.8,0.5 2.9,0.1 2.8,-0.2 2.7,-0.5 2.5,-0.8 2.3,-1.1 2.1,-1.4 1.7,-1.7 1.6,-1.8 1.9,-1.5 2.5,-0.8 2.8,0 2.7,0.9 2.3,1.6 1.4,2.1 0.5,2.3 -0.6,2.2 -1.5,1.8 -1.5,1.8 -1.2,2 -0.8,2.1 -0.4,2.3 0,2.3 0.4,2.3 0.8,2.3 1.2,2.2 1.5,2.1 1.9,1.8 2.2,1.7 2.4,1.5 2.5,1.3 2.5,1.2 2.6,1.3 2.5,1.2 2.6,1.2 2.6,1.2 2.6,1.1 2.7,1 2.8,0.6 2.9,0.2 2.8,0 2.7,-0.4 2.6,-0.7 2.4,-1.1 2.2,-1.3 1.8,-1.5 1.6,-1.9 1.2,-1.9 0.9,-2.1 1.1,-2 2,-1.5 2.6,-0.7 2.8,0.2 2.7,0.9 2.1,1.7 1.4,2.2 0.3,2.3 -0.7,2.1 -0.9,2.2 -0.5,2.2 -0.2,2.3 0.3,2.3 0.7,2.3 1,2.2 1.4,2.1 1.8,2 2.1,1.8 2.3,1.5 2.5,1.3 2.7,0.9 2.8,0.8 2.8,0.7 2.8,0.7 2.7,0.7 2.8,0.6 2.9,0.7 2.8,0.6 2.8,0.4 2.8,0 2.8,-0.3 2.7,-0.6 2.4,-0.9 2.3,-1.2 1.9,-1.5 1.7,-1.7 1.3,-1.9 0.9,-2.1 0.6,-2.2 0.2,-2.3 0.3,-2.3 1.2,-1.9 2.1,-1.4 2.6,-0.6 2.9,0.3 2.6,1.1 2.1,1.7 1.1,2.2 0.2,2.3 -0.1,2.3 0.1,2.3 0.5,2.3 1,2.3 1.2,2.2 1.7,2 1.9,1.8 2.3,1.6 2.5,1.4 2.6,1.1 2.8,0.8 2.8,0.4 2.8,0.2 2.9,0.1 2.8,0.1 2.9,0.1 2.8,0.1 2.8,0 2.9,0 2.7,-0.1 2.7,-0.5 2.6,-0.8 2.3,-1.1 2.1,-1.4 1.8,-1.7 1.4,-1.8 1.1,-2.1 0.6,-2.2 0.3,-2.2 -0.1,-2.3 -0.5,-2.4 -0.5,-2.3 0.3,-2.2 1.4,-1.9 2.2,-1.3 2.6,-0.4 2.9,0.3 2.5,1.2 2,1.9 1.1,2.2z"/>
<use href="#ol" x="-0.94" y="3.78"/>
<use href="#ol" x="-1.87" y="7.56"/>
<use href="#ol" x="-2.81" y="11.34"/>
<use href="#ol" x="-3.75" y="15.12"/>
<use href="#ol" x="-4.68" y="18.90"/>
<use href="#ol" x="-5.62" y="22.68"/>
<use href="#ol" x="-6.56" y="26.46"/>
<use href="#ol" x="-7.49" y="30.24"/>
<use href="#ol" x="-8.43" y="34.02"/>
<use href="#ol" x="-9.37" y="37.80"/>
<use href="#ol" x="-10.30" y="41.58"/>
<use href="#ol" x="-11.24" y="45.36"/>
<use href="#ol" x="-12.18" y="49.14"/>
<use href="#ol" x="-13.11" y="52.92"/>
<path id="og" d="M732.8,645.4l0.8,-2.1 0.4,-2.3 0,-2.3 -0.4,-2.3 -0.8,-2.3 -1.2,-2.2 -1.2,-2.1 -0.6,-2.3 0.5,-2.3 1.5,-1.8 2.3,-1.1 2.7,-0.4 2.8,0.5 2.5,1.3 1.9,1.9 1.3,2.2 1.4,2.1 1.7,2 2.1,1.7 2.3,1.6 2.5,1.3 2.7,1 2.8,0.6 2.8,0.4 2.9,0 2.7,-0.3 2.7,-0.6 2.4,-1 2.4,-1 2.4,-1.1 2.3,-1 2.4,-1.1 2.3,-1.2 2.3,-1.1 2.3,-1.2 1.9,-1.5 1.7,-1.7 1.3,-1.9 1,-2.1 0.5,-2.2 0.2,-2.3 -0.3,-2.3 -0.6,-2.3 -1.1,-2.2 -1.4,-2.2 -1.8,-1.9 -1.9,-1.9 -1.4,-2.1 -0.4,-2.3 0.7,-2.2 1.6,-1.8 2.3,-1 2.8,-0.3 2.8,0.7 2.4,1.3 2,1.9 1.9,1.8 2.2,1.7 2.5,1.3 2.6,1.1 2.8,0.8 2.8,0.5 2.9,0.2 2.7,-0.2 2.7,-0.6 2.6,-0.8 2.3,-1.1 2,-1.5 1.9,-1.5 1.9,-1.6 1.9,-1.5 1.8,-1.6 1.9,-1.6 1.8,-1.6 1.7,-1.7 1.5,-1.9 1,-2 0.7,-2.2 0.3,-2.2 -0.1,-2.3 -0.5,-2.3 -0.9,-2.3 -1.3,-2.2 -1.7,-2 -1.9,-1.8 -2.3,-1.7 -2.3,-1.4 -2.2,-1.7 -1.2,-2.2 -0.3,-2.3 0.8,-2.1 1.7,-1.7 2.4,-1 2.8,-0.1 2.8,0.7 2.4,1.4 2.4,1.5 2.6,1.2 2.7,0.9 2.9,0.5 2.8,0.3 2.8,-0.1 2.7,-0.4 2.6,-0.7 2.4,-1 2.1,-1.4 1.9,-1.5 1.5,-1.9 1.3,-1.9 1.3,-1.9 1.3,-2 1.2,-2 1.2,-1.9 1.2,-2 1.1,-2 0.8,-2.2 0.5,-2.2 0,-2.3 -0.4,-2.3 -0.8,-2.3 -1.1,-2.2 -1.6,-2.1 -1.8,-1.9 -2.2,-1.7 -2.4,-1.5 -2.5,-1.1 -2.7,-1 -2.6,-1.2 -2,-1.8 -1.2,-2.2 -0.1,-2.3 0.9,-2 1.9,-1.6 2.5,-0.9 2.8,0 2.7,0.8 2.7,0.9 2.8,0.7 2.9,0.4 2.8,0.1 2.8,-0.3 2.6,-0.7M902.2,470.1l-2.1,-1.8 -2.3,-1.6 -2.5,-1.2 -2.7,-1 -2.8,-0.7 -2.8,-0.4 -2.8,-0.5 -2.6,-1.3 -1.9,-1.8 -1,-2.3 0,-2.2 1.1,-2.1 1.9,-1.5 2.6,-0.7 2.8,0.1 2.9,0.3 2.8,0.2 2.8,-0.2 2.7,-0.5 2.5,-0.8 2.3,-1.1 2.1,-1.4 1.7,-1.7 1.5,-1.9 1,-2 0.7,-2.2 0.2,-2.3 -0.1,-2.3 -0.1,-2.3 -0.2,-2.3 -0.2,-2.3 -0.2,-2.3 -0.3,-2.4 -0.3,-2.3 -0.5,-2.3 -0.9,-2.3 -1.3,-2.1 -1.6,-2.1 -2,-1.8 -2.2,-1.6 -2.4,-1.4 -2.7,-1.1 -2.7,-0.8 -2.9,-0.5 -2.8,-0.1 -2.8,0.2 -2.8,0.1 -2.8,-0.5 -2.5,-1.4 -1.8,-1.9 -0.9,-2.2 0.2,-2.3 1.2,-2 2,-1.4 2.6,-0.6 2.8,-0.2 2.8,-0.4 2.5,-0.8 2.5,-1 2.1,-1.3 1.9,-1.6 1.5,-1.8 1.2,-2 0.8,-2.1 0.4,-2.2 0,-2.3 -0.5,-2.4 -0.7,-2.2 -0.9,-2.3 -0.9,-2.3 -0.9,-2.2 -1,-2.3 -1,-2.2 -1,-2.3 -1.2,-2.2 -1.5,-2.1 -1.8,-1.9 -2.1,-1.7 -2.4,-1.5 -2.6,-1.2 -2.7,-0.9 -2.8,-0.6 -2.9,-0.2 -2.8,0.1 -2.7,0.4 -2.6,0.7 -2.6,0.8 -2.7,0.2 -2.8,-0.7 -2.4,-1.4 -1.7,-2 -0.8,-2.3 0.4,-2.2 1.3,-1.9 2.1,-1.3 2.6,-0.8 2.4,-1 2.3,-1.2 1.9,-1.5 1.7,-1.7 1.3,-1.9 0.9,-2.1M840.3,293.1l-2.9,-0.3 -2.8,-0.1 -2.8,0.3 -2.6,0.6 -2.5,1 -2.2,1.2 -2.1,1.3 -2.5,1 -2.8,0 -2.7,-0.7 -2.4,-1.5 -1.5,-2.1 -0.6,-2.3 0.4,-2.2 1.5,-1.8 2,-1.4 2.1,-1.4 1.8,-1.7 1.4,-1.8 1.1,-2.1 0.6,-2.2 0.3,-2.2 -0.1,-2.3 -0.6,-2.3 -0.9,-2.3 -1.3,-2.2 -1.7,-2 -1.9,-1.8 -2.2,-1.7 -2.1,-1.8 -2.1,-1.7 -2.2,-1.7 -2.2,-1.6 -2.2,-1.7 -2.2,-1.6 -2.5,-1.4 -2.6,-1.1 -2.7,-0.8 -2.9,-0.5 -2.8,-0.2 -2.8,0.2 -2.7,0.5 -2.5,0.8 -2.3,1.2 -2.1,1.4 -1.8,1.6 -1.5,1.8 -1.9,1.6 -2.5,0.8 -2.8,-0.1 -2.8,-0.8 -2.2,-1.6 -1.5,-2.1 -0.4,-2.3 0.6,-2.2 1.4,-1.9 1.5,-1.8 1.2,-2 0.8,-2.1 0.5,-2.2 0,-2.3 -0.4,-2.4 -0.8,-2.2 -1.2,-2.2 -1.6,-2.1 -1.8,-1.9 -2.2,-1.7 -2.4,-1.4 -2.5,-1.3 -2.6,-1.3 -2.5,-1.2 -2.6,-1.3 -2.5,-1.2 -2.6,-1.2 -2.6,-1.1 -2.8,-0.9 -2.8,-0.6 -2.8,-0.3 -2.8,0.1 -2.8,0.4 -2.6,0.7 -2.4,1 -2.1,1.3 -1.9,1.6 -1.5,1.8 -1.2,2 -0.9,2.1 -1.1,2 -2,1.4 -2.6,0.7 -2.8,-0.1 -2.7,-1 -2.2,-1.7 -1.3,-2.1 -0.3,-2.3 0.7,-2.2 0.8,-2.1 0.6,-2.2 0.1,-2.3 -0.2,-2.3 -0.7,-2.3 -1,-2.3 -1.5,-2.1 -1.7,-1.9 -2.1,-1.8 -2.3,-1.5 -2.5,-1.3 -2.7,-1 -2.8,-0.7 -2.8,-0.8 -2.8,-0.7 -2.8,-0.6 -2.8,-0.7 -2.8,-0.6 -2.8,-0.6 -2.8,-0.4 -2.9,-0.1 -2.7,0.3 -2.7,0.6 -2.4,0.9 -2.3,1.2 -2,1.5 -1.6,1.7 -1.3,2 -1,2.1 -0.5,2.2 -0.2,2.3 -0.3,2.2 -1.2,2 -2.1,1.3 -2.7,0.6 -2.8,-0.2 -2.6,-1.1 -2.1,-1.8 -1.2,-2.2 -0.2,-2.3 0.2,-2.3 -0.1,-2.3 -0.6,-2.3 -0.9,-2.2 -1.3,-2.2 -1.6,-2 -2,-1.9 -2.2,-1.6 -2.5,-1.4 -2.6,-1 -2.8,-0.8 -2.8,-0.5 -2.9,-0.2 -2.8,-0.1 -2.8,-0.1 -2.9,-0.1 -2.8,0 -2.8,-0.1 -2.9,0 -2.8,0.2 -2.7,0.5 -2.5,0.8 -2.3,1.1 -2.1,1.4 -1.8,1.6 -1.4,1.9 -1.1,2 -0.7,2.2 -0.2,2.3 0.1,2.3 0.5,2.3 0.5,2.3 -0.3,2.3 -1.4,1.8 -2.2,1.3 -2.7,0.5 -2.8,-0.4 -2.6,-1.2 -1.9,-1.8 -1.1,-2.2 -0.6,-2.3 -0.8,-2.3 -1.1,-2.2 -1.5,-2.1 -1.9,-1.9 -2.1,-1.7 -2.4,-1.5M497.0,196.1l-0.8,2.2 -0.4,2.2 0,2.3 0.4,2.3 0.8,2.3 1.2,2.2 1.2,2.2 0.6,2.3 -0.5,2.2 -1.5,1.8 -2.3,1.2 -2.7,0.3 -2.8,-0.5 -2.5,-1.3 -1.9,-1.9 -1.2,-2.1 -1.5,-2.1 -1.7,-2 -2.1,-1.8 -2.3,-1.5 -2.5,-1.3 -2.7,-1 -2.8,-0.7 -2.8,-0.4 -2.8,0 -2.8,0.3 -2.6,0.7 -2.5,0.9 -2.4,1 -2.4,1.1 -2.3,1.1 -2.4,1.1 -2.3,1.1 -2.3,1.1 -2.2,1.3 -2,1.4 -1.7,1.7 -1.3,2 -1,2 -0.5,2.3 -0.2,2.2 0.3,2.4 0.7,2.3 1,2.2 1.4,2.1 1.8,2 1.9,1.9 1.4,2.1 0.4,2.3 -0.6,2.2 -1.7,1.7 -2.3,1.1 -2.8,0.2 -2.8,-0.6 -2.4,-1.4 -1.9,-1.9 -2,-1.8 -2.2,-1.6 -2.5,-1.4 -2.6,-1.1 -2.8,-0.8 -2.8,-0.5 -2.8,-0.1 -2.8,0.2 -2.7,0.5 -2.5,0.8 -2.3,1.2 -2.1,1.4 -1.9,1.5 -1.9,1.6 -1.9,1.6 -1.8,1.6 -1.8,1.6 -1.8,1.6 -1.8,1.6 -1.4,1.9 -1.1,2 -0.7,2.2 -0.3,2.3 0.1,2.3 0.5,2.3 0.9,2.2 1.3,2.2 1.7,2 2,1.9 2.2,1.6 2.4,1.5 2.1,1.7 1.3,2.1 0.2,2.3 -0.8,2.2 -1.7,1.6 -2.4,1 -2.8,0.1 -2.8,-0.7 -2.4,-1.4 -2.4,-1.4 -2.6,-1.2 -2.7,-0.9 -2.8,-0.6 -2.9,-0.3 -2.8,0.1M344.1,311.8l1.2,2.2 1.5,2 1.8,1.9 2.2,1.7 2.4,1.5 2.6,1.2 2.7,1 2.5,1.1 2.1,1.8 1.1,2.2 0.1,2.3 -0.9,2.1 -1.8,1.6 -2.5,0.8 -2.8,0 -2.8,-0.8 -2.7,-0.9 -2.8,-0.7 -2.8,-0.4 -2.9,0 -2.7,0.3 -2.7,0.6 -2.4,0.9 -2.3,1.3 -1.9,1.5 -1.7,1.7 -1.3,1.9 -0.9,2.1 -0.6,2.2 -0.6,2.2 -0.5,2.2 -0.6,2.3 -0.5,2.2 -0.4,2.2 -0.5,2.3 -0.1,2.2 0.2,2.4 0.6,2.3 1.1,2.2 1.4,2.1 1.7,2 2.1,1.8 2.3,1.5 2.5,1.3 2.7,1 2.8,0.7 2.8,0.4 2.8,0.5 2.6,1.2 1.9,1.9 1,2.2 0,2.3 -1.1,2 -1.9,1.5 -2.6,0.8 -2.8,-0.1 -2.8,-0.4 -2.9,-0.2 -2.8,0.2 -2.7,0.5 -2.5,0.8 -2.3,1.2 -2.1,1.4 -1.7,1.6 -1.4,1.9 -1.1,2 -0.6,2.2 -0.3,2.3 0.1,2.3 0.1,2.3 0.2,2.3 0.2,2.4 0.3,2.3 0.2,2.3 0.3,2.3 0.5,2.3 0.9,2.3 1.3,2.2 1.6,2 2,1.8 2.2,1.7 2.5,1.4 2.6,1.1 2.8,0.7 2.8,0.5 2.8,0.2 2.8,-0.2 2.8,-0.2 2.8,0.6 2.5,1.3 1.8,1.9 0.9,2.3 -0.2,2.3 -1.2,1.9 -2,1.4 -2.6,0.7 -2.8,0.2 -2.7,0.4 -2.6,0.7 -2.4,1 -2.2,1.3 -1.8,1.6 -1.6,1.8 -1.2,2 -0.8,2.1 -0.4,2.3 0.1,2.3 0.4,2.3 0.8,2.3 0.8,2.3 0.9,2.2 1,2.3 0.9,2.2 1,2.3 1,2.2 1.2,2.2 1.5,2.1 1.8,1.9 2.2,1.8 2.4,1.4 2.5,1.2 2.8,0.9 2.8,0.6 2.8,0.3 2.8,-0.1 2.7,-0.4 2.6,-0.7 2.6,-0.8 2.8,-0.2 2.7,0.6 2.5,1.4 1.6,2 0.8,2.3 -0.3,2.3 -1.3,1.9 -2.2,1.3 -2.5,0.8 -2.5,0.9 -2.2,1.2 -2,1.5 -1.7,1.7 -1.3,2 -0.9,2.1M389.6,548.4l2.8,0.4 2.8,0 2.8,-0.3 2.6,-0.6 2.5,-0.9 2.2,-1.2 2.2,-1.4 2.4,-0.9 2.8,-0.1 2.8,0.8 2.3,1.5 1.6,2 0.6,2.3 -0.5,2.2 -1.4,1.9 -2.1,1.4 -2.1,1.4 -1.7,1.6 -1.5,1.9 -1,2 -0.7,2.2 -0.3,2.3 0.1,2.3 0.6,2.3 0.9,2.2 1.3,2.2 1.7,2 2,1.9 2.1,1.7 2.1,1.7 2.2,1.7 2.1,1.7 2.2,1.7 2.2,1.6 2.2,1.7 2.5,1.3 2.6,1.2 2.8,0.8 2.8,0.5 2.8,0.1 2.8,-0.2 2.7,-0.5 2.5,-0.8 2.4,-1.1 2,-1.4 1.8,-1.7 1.5,-1.8 1.9,-1.5 2.5,-0.8 2.9,0 2.7,0.9 2.2,1.6 1.5,2.1 0.4,2.3 -0.6,2.2 -1.4,1.8 -1.5,1.8 -1.2,2 -0.8,2.1 -0.4,2.3 -0.1,2.3 0.5,2.3 0.8,2.3 1.1,2.2 1.6,2.1 1.9,1.8 2.1,1.7 2.4,1.5 2.5,1.3 2.6,1.2 2.5,1.3 2.6,1.2 2.6,1.2 2.6,1.2 2.6,1.1 2.7,1 2.8,0.6 2.8,0.2 2.9,0 2.7,-0.4 2.6,-0.7 2.4,-1.1 2.1,-1.3 1.9,-1.6 1.5,-1.8 1.2,-1.9 0.9,-2.1 1.2,-2 2,-1.5 2.5,-0.7 2.9,0.1 2.6,1 2.2,1.7 1.3,2.2 0.3,2.3 -0.6,2.1 -0.9,2.2 -0.6,2.2 -0.1,2.3 0.2,2.3 0.7,2.3 1.1,2.2 1.4,2.1 1.7,2 2.1,1.8 2.3,1.5 2.6,1.3 2.7,0.9 2.7,0.8 2.8,0.7 2.8,0.7 2.8,0.7 2.8,0.6 2.8,0.7 2.8,0.6 2.9,0.4 2.8,0 2.8,-0.3 2.6,-0.6 2.5,-0.9 2.2,-1.2 2,-1.5 1.6,-1.7 1.3,-1.9 1,-2.1 0.5,-2.2 0.2,-2.3 0.3,-2.3 1.3,-1.9 2.1,-1.4 2.6,-0.6 2.8,0.3 2.6,1.1 2.1,1.7 1.2,2.2 0.2,2.3 -0.2,2.3 0.2,2.3 0.5,2.3 0.9,2.3 1.3,2.2 1.6,2 2,1.8 2.2,1.6 2.5,1.4 2.6,1.1 2.8,0.8 2.8,0.4 2.9,0.2 2.8,0.1 2.9,0.1 2.8,0.1 2.8,0.1 2.9,0 2.8,0 2.8,-0.1 2.7,-0.5 2.5,-0.8 2.4,-1.1 2,-1.4 1.8,-1.7 1.4,-1.8 1.1,-2.1 0.7,-2.2 0.3,-2.2 -0.2,-2.3 -0.5,-2.4 -0.5,-2.3 0.4,-2.2 1.3,-1.9 2.2,-1.3 2.7,-0.4 2.8,0.3 2.6,1.2 1.9,1.9 1.1,2.2 0.6,2.3 0.8,2.3 1.2,2.2 1.5,2.1 1.8,1.9 2.2,1.7 2.4,1.4"/>
<use href="#og" x="-0.94" y="3.78"/>
<use href="#og" x="-1.87" y="7.56"/>
<use href="#og" x="-2.81" y="11.34"/>
<use href="#og" x="-3.75" y="15.12"/>
</g>
<path d="M725.5,647.5 l7.3,-2.1 l2.4,6.5M724.5,651.3 l7.3,-2.1 l2.4,6.5M723.6,655.1 l7.3,-2.1 l2.4,6.5M722.7,658.9 l7.3,-2.1 l2.4,6.5M721.7,662.6 l7.3,-2.1 l2.4,6.5M891.1,503.8 l1.8,4.4 l-6,2.4M894.9,472.2 l7.3,-2.1 l2.4,6.5M894.0,475.9 l7.3,-2.1 l2.4,6.5M893.0,479.7 l7.3,-2.1 l2.4,6.5M892.1,483.5 l7.3,-2.1 l2.4,6.5M891.2,487.3 l7.3,-2.1 l2.4,6.5M864.9,322.8 l1.8,4.4 l-6,2.4M833.0,295.2 l7.3,-2.1 l2.4,6.5M832.0,299.0 l7.3,-2.1 l2.4,6.5M831.1,302.8 l7.3,-2.1 l2.4,6.5M830.1,306.6 l7.3,-2.1 l2.4,6.5M829.2,310.3 l7.3,-2.1 l2.4,6.5M539.7,182.6 l1.8,4.4 l-6,2.4M489.7,198.2 l7.3,-2.1 l2.4,6.5M488.8,202.0 l7.3,-2.1 l2.4,6.5M487.9,205.8 l7.3,-2.1 l2.4,6.5M486.9,209.6 l7.3,-2.1 l2.4,6.5M486.0,213.4 l7.3,-2.1 l2.4,6.5M364.2,275.4 l1.8,4.4 l-6,2.4M336.8,313.9 l7.3,-2.1 l2.4,6.5M335.8,317.6 l7.3,-2.1 l2.4,6.5M334.9,321.4 l7.3,-2.1 l2.4,6.5M334.0,325.2 l7.3,-2.1 l2.4,6.5M333.0,329.0 l7.3,-2.1 l2.4,6.5M361.3,510.0 l1.8,4.4 l-6,2.4M382.3,550.5 l7.3,-2.1 l2.4,6.5M381.3,554.3 l7.3,-2.1 l2.4,6.5M380.4,558.1 l7.3,-2.1 l2.4,6.5M379.5,561.9 l7.3,-2.1 l2.4,6.5M378.5,565.6 l7.3,-2.1 l2.4,6.5M686.6,650.1 l1.8,4.4 l-6,2.4M924.2,363.4 l5.5,2.6M923.3,367.2 l5.2,2.5M922.3,371.0 l5.0,2.4M921.4,374.8 l4.8,2.2M920.5,378.5 l4.5,2.1M919.5,382.3 l4.2,2.0M918.6,386.1 l4.0,1.9M917.7,389.9 l3.8,1.8M916.7,393.7 l3.5,1.7M915.8,397.4 l3.2,1.5M914.8,401.2 l3.0,1.4M913.9,405.0 l2.8,1.3M913.0,408.8 l2.5,1.2M912.0,412.6 l2.2,1.1M911.1,416.3 l2.0,0.9M910.2,420.1 l1.9,0.9M909.2,423.9 l1.9,0.9M908.3,427.7 l1.9,0.9M907.4,431.5 l1.9,0.9M906.4,435.2 l1.9,0.9M704.7,356.5 l4.5,1.6M703.8,360.3 l4.3,1.5M702.8,364.0 l4.1,1.5M701.9,367.8 l3.9,1.4M701.0,371.6 l3.7,1.3M700.0,375.4 l3.5,1.2M699.1,379.2 l3.3,1.2M698.2,382.9 l3.1,1.1M697.2,386.7 l2.9,1.0M696.3,390.5 l2.7,0.9M695.3,394.3 l2.5,0.9M694.4,398.1 l2.2,0.8M693.5,401.8 l2.0,0.7M692.5,405.6 l1.8,0.7M691.6,409.4 l1.6,0.6M690.7,413.2 l1.6,0.6M689.7,417.0 l1.6,0.6M688.8,420.7 l1.6,0.6M687.9,424.5 l1.6,0.6M686.9,428.3 l1.6,0.6" fill="none" stroke="#f2e61a" stroke-width="1.35"/>
<path d="M924.5,362.2 L905.5,439.0M705.0,355.3 L686.0,432.1" fill="none" stroke="#e6dc28" stroke-width="1.2" stroke-dasharray="2.2 1.6"/>
<g fill="none" stroke="#fff200" stroke-width="2.3" stroke-linejoin="round">
<path d="M707.8,582.8l1,1.8 1.9,1.3 2.4,0.4 2.2,-0.3 2.3,-0.4 2.2,-0.4 2.3,-0.4 2.2,-0.5 2.2,-0.4 2.3,-0.5 2.2,-0.5 1.8,-1.1 0.8,-1.7 -0.3,-1.9 -1,-1.8 -1.1,-1.8 -0.8,-1.9 -0.6,-1.9 -0.3,-2 -0.1,-1.9 0.2,-1.9 0.4,-1.8 0.6,-1.8 0.9,-1.7 1.1,-1.6 1.4,-1.5 1.5,-1.3 1.7,-1.2 1.9,-1 2,-0.9 2.1,-0.6 2.2,-0.5 2.3,-0.2 2.4,-0.1 2.3,0.1 2.4,0.4 2.3,0.5 2.3,0.8 2.2,0.9 2.1,1.1 2,1.2 1.8,1.4 1.6,1.6 1.5,1.6 1.2,1.8 1.1,1.8 1.2,1.7 1.9,1.3 2.3,0.5 2.2,-0.5 2,-0.9 2,-0.9 1.9,-0.9 2,-0.9 1.9,-0.9 2,-0.9 1.9,-1 1.8,-1.1 0.8,-1.7 -0.2,-1.9 -1.4,-1.7 -1.6,-1.6 -1.4,-1.6 -1.3,-1.7 -1.1,-1.9 -0.8,-1.8 -0.6,-1.9 -0.3,-2 -0.1,-1.9 0.1,-1.9 0.4,-1.9 0.7,-1.8 0.9,-1.7 1.1,-1.6 1.3,-1.4 1.5,-1.4 1.7,-1.2 1.9,-1 2,-0.8 2.1,-0.7 2.2,-0.5 2.3,-0.2 2.4,-0.1 2.3,0.2 2.4,0.3 2.3,0.5 2.3,0.8 2.2,0.9 2.1,1.1 2,1.2 1.8,1.4 1.6,1.5 1.6,1.6 1.9,1.3 2.3,0.5 2.2,-0.5 1.7,-1.2 1.6,-1.3 1.6,-1.3 1.5,-1.3 1.6,-1.4 1.5,-1.3 1.5,-1.3 1.5,-1.4 0.9,-1.7 -0.3,-1.9 -1.3,-1.7 -2,-1.2 -2,-1.3 -1.8,-1.4 -1.7,-1.5 -1.4,-1.6 -1.3,-1.7 -1.1,-1.9 -0.8,-1.8 -0.6,-1.9 -0.4,-2 -0.1,-1.9 0.2,-1.9 0.4,-1.9 0.6,-1.7 0.9,-1.8 1.1,-1.6 1.3,-1.4 1.5,-1.4 1.7,-1.2 1.8,-1 2,-0.9 2.2,-0.6 2.2,-0.5 2.3,-0.3 2.3,0 2.4,0.1 2.4,0.3 2.3,0.6 2.3,0.7 2.2,0.9 2.1,1.1 2,1.2 2,1.2 2.3,0.4 2.2,-0.4 1.6,-1.4 1,-1.6 1.1,-1.6 1.1,-1.6 1,-1.7 1,-1.6 1,-1.7 1,-1.6 0.8,-1.7 -0.3,-2 -1.3,-1.6 -2.1,-1.1 -2.2,-0.8 -2.2,-0.9 -2.1,-1.1 -2,-1.2 -1.9,-1.4 -1.6,-1.5 -1.5,-1.6 -1.3,-1.7 -1.1,-1.8 -0.8,-1.9 -0.6,-1.9 -0.4,-1.9 -0.1,-2 0.1,-1.9 0.4,-1.8 0.6,-1.8 0.9,-1.7 1.1,-1.7 1.3,-1.4 1.5,-1.4 1.7,-1.2 1.8,-1 2,-0.9 2.1,-0.7 2.3,-0.4 2.3,-0.3 2.3,-0.1 2.4,0.1 2.3,0.4 2.4,0.5 2.3,0.7 2.2,0.8 2.3,0.5 2.2,-0.5 1.6,-1.3 0.6,-1.7 0.5,-1.9 0.5,-1.8 0.5,-1.9 0.4,-1.8 0.4,-1.9 0.4,-1.8 0.4,-1.9 -0.2,-1.9 -1.3,-1.7 -2.1,-1.1 -2.4,-0.3 -2.3,-0.4 -2.4,-0.5 -2.3,-0.7 -2.2,-0.8 -2.1,-1.1 -2,-1.2 -1.8,-1.4 -1.7,-1.5 -1.5,-1.6 -1.3,-1.7 -1.1,-1.9 -0.8,-1.8 -0.6,-1.9 -0.4,-2 -0.1,-1.9 0.1,-1.9 0.4,-1.9 0.6,-1.8 0.8,-1.7 1.1,-1.6 1.3,-1.5 1.5,-1.3 1.7,-1.2 1.8,-1.1 2,-0.8 2.1,-0.7 2.3,-0.5 2.2,-0.3 2.4,-0.1 2.4,0.1 2.3,0.3 2.4,0.3 2.2,-0.4 1.6,-1.3 0.5,-1.8 -0.1,-1.9 -0.1,-2 -0.2,-1.9 -0.2,-1.9 -0.2,-2 -0.2,-1.9 -0.2,-1.9 -0.4,-2 -1.3,-1.7 -2,-1 -2.4,-0.2 -2.3,0.2 -2.4,0.1 -2.3,-0.1 -2.4,-0.3 -2.3,-0.5 -2.3,-0.7 -2.2,-0.9 -2.2,-1 -2,-1.2 -1.8,-1.4 -1.7,-1.5 -1.5,-1.6 -1.3,-1.7 -1.1,-1.9 -0.8,-1.8 -0.7,-1.9 -0.3,-2 -0.2,-1.9 0.2,-1.9 0.3,-1.9 0.6,-1.8 0.9,-1.7 1,-1.6 1.3,-1.5 1.5,-1.4 1.7,-1.2 1.8,-1 2,-0.9 2.1,-0.7 2.3,-0.5 2.2,-0.3 2.4,-0.1 2.2,-0.5 1.6,-1.3 0.5,-1.8 -0.5,-1.9 -0.7,-1.9 -0.8,-1.9 -0.7,-1.8 -0.8,-1.9 -0.8,-1.9 -0.9,-1.9 -0.8,-1.8 -1.3,-1.7 -2.1,-1.1 -2.3,-0.2 -2.2,0.6 -2.1,0.6 -2.2,0.5 -2.3,0.4 -2.3,0.1 -2.4,-0.1 -2.3,-0.3 -2.4,-0.5 -2.3,-0.7 -2.2,-0.8 -2.1,-1.1 -2,-1.2 -1.9,-1.4 -1.7,-1.5 -1.5,-1.6 -1.3,-1.7 -1.1,-1.8 -0.8,-1.9 -0.7,-1.9 -0.4,-1.9 -0.1,-1.9 0.1,-1.9 0.4,-1.9 0.6,-1.8 0.8,-1.7 1.1,-1.6 1.2,-1.5 1.5,-1.4 1.7,-1.2 1.8,-1.1 2,-0.9 2.1,-0.7 2.1,-0.7 1.6,-1.2 0.6,-1.8 -0.6,-1.9 -1.3,-1.7 -1.3,-1.8 -1.3,-1.7 -1.3,-1.7 -1.4,-1.7 -1.3,-1.7 -1.4,-1.7 -1.5,-1.6 -2,-1.1 -2.4,-0.2 -2,0.7 -1.8,1.1 -1.8,1.1 -2,0.9 -2.1,0.7 -2.2,0.5 -2.3,0.3 -2.3,0.2 -2.4,-0.1 -2.3,-0.3 -2.4,-0.5 -2.3,-0.7 -2.2,-0.8 -2.1,-1.1 -2,-1.2 -1.9,-1.3 -1.7,-1.5 -1.5,-1.6 -1.3,-1.7 -1.1,-1.8 -0.9,-1.9 -0.6,-1.9 -0.4,-1.9 -0.2,-2 0.1,-1.9 0.4,-1.8 0.6,-1.8 0.8,-1.8 1.1,-1.6 1.2,-1.5 1.5,-1.4 1.7,-1.2 1.7,-1.1 1.6,-1.3 0.6,-1.8 -0.6,-1.9 -1.5,-1.6 -1.8,-1.4 -1.7,-1.4 -1.8,-1.5 -1.8,-1.4 -1.8,-1.4 -1.9,-1.4 -1.8,-1.3 -2.1,-1.1 -2.3,-0.3 -2.1,0.7 -1.4,1.4 -1.3,1.5 -1.5,1.4 -1.6,1.2 -1.8,1.1 -2,0.9 -2.1,0.7 -2.2,0.6 -2.2,0.3 -2.4,0.1 -2.3,0 -2.4,-0.3 -2.4,-0.5 -2.3,-0.7 -2.2,-0.8 -2.1,-1.1 -2,-1.1 -1.9,-1.4 -1.7,-1.5 -1.5,-1.6 -1.3,-1.7 -1.1,-1.8 -0.9,-1.9 -0.7,-1.9 -0.4,-1.9 -0.1,-1.9 0.1,-1.9 0.3,-1.9 0.6,-1.8 0.8,-1.7 1,-1.7 1.3,-1.5 1.3,-1.5 0.6,-1.8 -0.5,-1.9 -1.6,-1.5 -2.1,-1.1 -2.1,-1.1 -2.1,-1 -2.2,-1 -2.1,-1 -2.2,-1 -2.1,-1 -2.2,-1 -2.4,-0.2 -2,0.7 -1.3,1.4 -0.8,1.8 -0.8,1.7 -1,1.7 -1.3,1.5 -1.4,1.4 -1.6,1.2 -1.9,1.1 -1.9,0.9 -2.1,0.7 -2.2,0.6 -2.3,0.3 -2.3,0.1 -2.4,0 -2.3,-0.3 -2.4,-0.5 -2.3,-0.6 -2.2,-0.9 -2.1,-1 -2.1,-1.2 -1.8,-1.3 -1.7,-1.5 -1.6,-1.6 -1.3,-1.7 -1.1,-1.8 -0.9,-1.9 -0.7,-1.9 -0.4,-1.9 -0.1,-1.9 0,-1.9 0.4,-1.9 0.5,-1.8 0.8,-1.8 0.5,-1.8 -0.5,-1.9 -1.6,-1.6 -2.2,-0.8 -2.3,-0.6 -2.3,-0.6 -2.3,-0.6 -2.4,-0.6 -2.3,-0.5 -2.3,-0.6 -2.4,-0.5 -2.3,-0.2 -2.1,0.7 -1.3,1.4 -0.4,1.9 -0.1,1.9 -0.3,1.9 -0.6,1.8 -0.8,1.7 -1,1.7 -1.2,1.5 -1.4,1.4 -1.7,1.2 -1.8,1.1 -1.9,0.9 -2.1,0.8 -2.2,0.5 -2.3,0.4 -2.3,0.1 -2.4,-0.1 -2.3,-0.2 -2.4,-0.5 -2.3,-0.6 -2.2,-0.9 -2.2,-1 -2,-1.2 -1.9,-1.3 -1.7,-1.5 -1.5,-1.6 -1.3,-1.7 -1.2,-1.8 -0.9,-1.9 -0.6,-1.9 -0.4,-1.9 -0.2,-1.9 0,-1.9 0.2,-1.9 -0.5,-1.9 -1.6,-1.6 -2.2,-0.9 -2.3,-0.1 -2.4,-0.1 -2.4,-0.1 -2.3,-0.1 -2.4,-0.1 -2.4,0 -2.3,0 -2.4,0 -2.1,0.6 -1.3,1.5 -0.3,1.9 0.5,1.9 0.4,1.9 0.2,1.9 0,2 -0.3,1.8 -0.6,1.9 -0.7,1.7 -1.1,1.6 -1.2,1.6 -1.4,1.4 -1.6,1.2 -1.8,1.1 -2,1 -2.1,0.7 -2.1,0.5 -2.3,0.4 -2.3,0.1 -2.4,0 -2.4,-0.3 -2.3,-0.4 -2.3,-0.7 -2.3,-0.8 -2.1,-1 -2,-1.2 -1.9,-1.3 -1.7,-1.5 -1.6,-1.6 -1.3,-1.7 -1.1,-1.8 -1,-1.8 -0.6,-1.9 -0.5,-2 -0.7,-1.9 -1.5,-1.6 -2.2,-0.8 -2.3,0 -2.3,0.4 -2.2,0.4 -2.3,0.4 -2.2,0.5 -2.2,0.4 -2.3,0.5 -2.2,0.5 -2.1,0.7 -1.3,1.4 -0.3,1.8 0.8,1.9 1.1,1.8 0.9,1.9 0.7,1.9 0.5,1.9 0.2,1.9 -0.1,1.9 -0.2,1.9 -0.6,1.8 -0.7,1.8 -1,1.6 -1.3,1.6 -1.4,1.4 -1.6,1.3 -1.8,1.1 -1.9,0.9 -2.1,0.7 -2.2,0.6 -2.3,0.3 -2.3,0.2 -2.4,-0.1 -2.3,-0.2 -2.4,-0.4 -2.3,-0.7 -2.2,-0.8 -2.2,-1 -2,-1.2 -1.9,-1.3 -1.7,-1.5 -1.6,-1.6 -1.3,-1.7 -1.2,-1.8 -1,-1.8 -1.5,-1.6 -2.2,-0.9 -2.3,0.1 -2.1,0.8 -2,0.8 -2,0.9 -1.9,0.9 -2,0.9 -1.9,1 -1.9,0.9 -2,1 -1.3,1.4 -0.3,1.9 0.8,1.8 1.6,1.6 1.5,1.6 1.4,1.7 1.2,1.7 0.9,1.9 0.7,1.9 0.5,1.9 0.2,1.9 0,2 -0.3,1.8 -0.5,1.9 -0.8,1.7 -1,1.7 -1.2,1.5 -1.4,1.4 -1.6,1.3 -1.8,1.1 -2,0.9 -2,0.8 -2.2,0.5 -2.3,0.4 -2.3,0.2 -2.4,-0.1 -2.3,-0.2 -2.4,-0.4 -2.3,-0.7 -2.2,-0.8 -2.2,-1 -2,-1.2 -1.9,-1.3 -1.7,-1.5 -1.6,-1.5 -1.7,-1.5 -2.2,-0.9 -2.3,0 -1.9,0.9 -1.6,1.3 -1.6,1.3 -1.5,1.3 -1.6,1.3 -1.5,1.3 -1.5,1.4 -1.6,1.3 -1.3,1.5 -0.3,1.9 0.8,1.8 1.8,1.4 2,1.2 1.9,1.4 1.7,1.4 1.6,1.6 1.4,1.7 1.2,1.7 0.9,1.9 0.7,1.9 0.5,1.9 0.2,1.9 0,1.9 -0.2,1.9 -0.6,1.9 -0.7,1.7 -1,1.7 -1.2,1.5 -1.4,1.4 -1.6,1.3 -1.8,1.1 -1.9,1 -2.1,0.7 -2.2,0.6 -2.2,0.4 -2.4,0.1 -2.3,0 -2.4,-0.2 -2.3,-0.5 -2.4,-0.6 -2.2,-0.8 -2.2,-1 -2,-1.2 -2,-1.2 -2.2,-0.9 -2.3,0 -1.9,0.9 -1.2,1.6 -1.1,1.6 -1,1.6 -1.1,1.6 -1,1.7 -1,1.6 -1,1.7 -1,1.7 -0.3,1.8 0.8,1.9 1.8,1.4 2.2,0.8 2.2,0.8 2.2,1 2.1,1.1 1.9,1.4 1.7,1.4 1.6,1.6 1.4,1.6 1.2,1.8 0.9,1.9 0.8,1.9 0.4,1.9 0.3,1.9 0,1.9 -0.3,1.9 -0.5,1.8 -0.7,1.8 -1,1.7 -1.2,1.5 -1.4,1.4 -1.6,1.3 -1.8,1.1 -1.9,1 -2.1,0.7 -2.1,0.6 -2.3,0.4 -2.3,0.2 -2.4,0 -2.4,-0.3 -2.3,-0.4 -2.3,-0.6 -2.3,-0.8 -2.3,-0.7 -2.3,-0.1 -1.9,0.9 -1.1,1.6 -0.5,1.9 -0.5,1.8 -0.4,1.8 -0.5,1.9 -0.4,1.8 -0.4,1.9 -0.4,1.9 -0.2,1.9 0.8,1.8 1.7,1.4 2.3,0.7 2.4,0.3 2.3,0.4 2.3,0.6 2.3,0.8 2.2,1 2,1.1 1.9,1.3 1.8,1.4 1.6,1.6 1.4,1.7 1.2,1.7 0.9,1.9 0.8,1.9 0.5,1.9 0.2,1.9 0,1.9 -0.2,1.9 -0.5,1.9 -0.8,1.7 -0.9,1.7 -1.2,1.6 -1.4,1.4 -1.6,1.3 -1.8,1.1 -1.9,0.9 -2.1,0.8 -2.1,0.6 -2.3,0.4 -2.3,0.2 -2.4,-0.1 -2.3,-0.2 -2.4,-0.3 -2.4,0 -1.9,0.9 -1.1,1.6 -0.1,1.9 0.2,1.9 0.1,1.9 0.2,2 0.2,1.9 0.2,1.9 0.2,2 0.2,1.9 0.8,1.9 1.7,1.4 2.3,0.6 2.4,-0.1 2.3,-0.1 2.3,-0.1 2.4,0.2 2.4,0.4 2.3,0.6 2.2,0.8 2.2,1 2.1,1.1 1.9,1.3 1.8,1.4 1.6,1.6 1.4,1.7 1.2,1.7 0.9,1.9 0.8,1.9 0.5,1.9 0.2,1.9 0,1.9 -0.2,1.9 -0.5,1.9 -0.7,1.7 -1,1.7 -1.2,1.6 -1.4,1.4 -1.5,1.3 -1.8,1.1 -1.9,1 -2.1,0.7 -2.1,0.6 -2.3,0.4 -2.3,0.2 -2.3,0.3 -2,0.8 -1.1,1.6 0.1,1.9 0.7,1.9 0.7,1.9 0.8,1.9 0.7,1.9 0.8,1.9 0.9,1.8 0.8,1.9 0.9,1.9 1.8,1.4 2.2,0.7 2.3,-0.3 2.1,-0.7 2.2,-0.6 2.2,-0.4 2.3,-0.2 2.4,-0.1 2.4,0.2 2.3,0.4 2.3,0.6 2.3,0.8 2.2,1 2,1.1 2,1.3 1.8,1.4 1.6,1.6 1.4,1.6 1.2,1.8 0.9,1.8 0.8,1.9 0.5,1.9 0.3,2 0,1.9 -0.3,1.9 -0.4,1.8 -0.8,1.8 -0.9,1.6 -1.2,1.6 -1.4,1.4 -1.5,1.3 -1.8,1.2 -1.9,0.9 -2.1,0.8 -2.1,0.7 -1.9,0.9 -1.1,1.6 0,1.9 1,1.8 1.3,1.7 1.3,1.7 1.3,1.7 1.4,1.7 1.3,1.7 1.4,1.7 1.4,1.7 1.7,1.5 2.3,0.6 2.3,-0.2 1.8,-1.1 1.8,-1.1 1.9,-1 2,-0.8 2.2,-0.6 2.2,-0.4 2.3,-0.2 2.4,0 2.3,0.1 2.4,0.4 2.3,0.6 2.3,0.8 2.2,0.9 2,1.1 2,1.3 1.8,1.4 1.6,1.6 1.4,1.7 1.2,1.7 1,1.9 0.7,1.8 0.6,2 0.2,1.9 0,1.9 -0.2,1.9 -0.4,1.9 -0.8,1.7 -0.9,1.7 -1.2,1.6 -1.3,1.4 -1.6,1.3 -1.8,1.2 -1.7,1.1 -1.1,1.6 -0.1,1.9 1.2,1.7 1.7,1.5 1.8,1.4 1.7,1.5 1.8,1.4 1.8,1.4 1.9,1.4 1.8,1.4 1.9,1.3 2.2,0.7 2.3,-0.3 1.8,-1.1 1.3,-1.5 1.3,-1.4 1.6,-1.3 1.7,-1.2 1.9,-1 2,-0.8 2.2,-0.6 2.2,-0.5 2.3,-0.2 2.4,0 2.3,0.2 2.4,0.3 2.3,0.6 2.3,0.8 2.2,0.9 2,1.1 2,1.3 1.8,1.4 1.6,1.6 1.4,1.6 1.2,1.8 1,1.8 0.8,1.9 0.5,1.9 0.3,2 0,1.9 -0.2,1.9 -0.5,1.8 -0.7,1.8 -0.9,1.7 -1.2,1.5 -1.3,1.5 -1,1.6 -0.1,1.9 1.1,1.8 2,1.3 2.1,1 2.1,1.1 2.1,1 2.1,1 2.2,1.1 2.1,0.9 2.2,1 2.3,0.7 2.3,-0.2 1.7,-1.1 0.9,-1.7 0.8,-1.8 0.9,-1.7 1.1,-1.5 1.4,-1.5 1.5,-1.3 1.7,-1.2 1.9,-1 2,-0.8 2.2,-0.6 2.2,-0.5 2.3,-0.2 2.4,0 2.4,0.1 2.3,0.4 2.3,0.6 2.3,0.7 2.2,1 2.1,1.1 1.9,1.2 1.8,1.5 1.6,1.5 1.5,1.7 1.2,1.7 1,1.8 0.8,1.9 0.5,1.9 0.3,2 0,1.9 -0.2,1.9 -0.4,1.8 -0.7,1.8 -0.7,1.8 -0.1,1.9 1.1,1.8 1.9,1.2 2.3,0.6 2.3,0.6 2.4,0.6 2.3,0.6 2.3,0.6 2.4,0.5 2.3,0.5 2.3,0.5 2.3,-0.2 1.8,-1.1 0.8,-1.7 0.1,-1.9 0.2,-1.9 0.5,-1.9 0.6,-1.8 0.9,-1.7 1.2,-1.5 1.3,-1.5 1.5,-1.3 1.8,-1.2 1.8,-1 2.1,-0.8 2.1,-0.7 2.2,-0.4 2.3,-0.3 2.4,0 2.4,0.2 2.3,0.3 2.3,0.6 2.3,0.7 2.2,1 2.1,1.1 1.9,1.2 1.8,1.4 1.7,1.6 1.4,1.6 1.2,1.8 1,1.8 0.8,1.9 0.6,1.9 0.3,1.9 0,2 -0.1,1.9 0,1.9 1.1,1.8 1.9,1.2 2.4,0.5 2.3,0.1 2.4,0.1 2.4,0.1 2.3,0 2.4,0.1 2.4,0 2.3,0 2.3,-0.2 1.8,-1.1 0.8,-1.7 -0.2,-1.9 -0.5,-1.9 -0.3,-2 -0.1,-1.9 0.1,-1.9 0.5,-1.8 0.6,-1.8 0.9,-1.7 1.1,-1.6 1.4,-1.5 1.5,-1.3 1.7,-1.2 1.9,-1 2,-0.8 2.1,-0.7 2.3,-0.4 2.3,-0.3 2.3,0 2.4,0.1 2.4,0.4 2.3,0.5 2.3,0.8 2.2,0.9 2,1.1 2,1.2 1.8,1.5 1.6,1.5 1.5,1.6 1.2,1.8 1,1.8 0.8,1.9 0.6,1.9z"/>
<path d="M525.7,161.6 L569.0,153.1 L546.5,99.2 L503.3,107.6 z"/>
<path d="M830.7,246.3 L856.5,279.3 L912.6,253.2 L886.8,220.3 z"/>
<path d="M890.8,407.0 L882.3,442.7 L949.1,458.8 L957.6,423.1 z"/>
<path d="M738.9,562.9 L695.6,571.4 L718.1,625.3 L761.3,616.9 z"/>
<path d="M429.8,479.0 L404.0,446.0 L347.9,472.1 L373.7,505.0 z"/>
<path d="M386.6,266.3 L406.5,234.6 L345.2,205.3 L325.4,237.0 z"/>
</g>
<rect x="537.2" y="137.0" width="5.6" height="5.6" fill="#fff200"/>
<rect x="859.1" y="251.5" width="5.6" height="5.6" fill="#fff200"/>
<rect x="905.5" y="427.3" width="5.6" height="5.6" fill="#fff200"/>
<rect x="721.8" y="581.9" width="5.6" height="5.6" fill="#fff200"/>
<rect x="395.8" y="468.2" width="5.6" height="5.6" fill="#fff200"/>
<rect x="373.8" y="238.1" width="5.6" height="5.6" fill="#fff200"/></svg>
<div style="position:absolute;left:8px;top:742px;width:1008px;height:18.5px;background:#f0f0f0;border-top:1px solid #9a9a9a;box-sizing:border-box"></div>
<div style="position:absolute;left:651.5px;top:743px;width:198.5px;height:16.5px;border-left:1px solid #a0a0a0;border-top:1px solid #a0a0a0;border-right:1px solid #fff;border-bottom:1px solid #fff;box-sizing:border-box"></div>
<div style="position:absolute;left:852.5px;top:743px;width:147.5px;height:16.5px;border-left:1px solid #a0a0a0;border-top:1px solid #a0a0a0;border-right:1px solid #fff;border-bottom:1px solid #fff;box-sizing:border-box"></div>
<div style="position:absolute;left:9px;top:743px;width:640px;height:16.5px;border-right:1px solid #fff;border-bottom:1px solid #fff;box-sizing:border-box"></div>
<span class="t" style="left:654.5px;top:745.4px;font-size:11px;line-height:11px;letter-spacing:-0.289px;color:#101018;">Property changed</span>
<span class="t" style="left:911.0px;top:745.4px;font-size:11px;line-height:11px;letter-spacing:-0.143px;color:#101018;">-16.9083, 24.4015</span>
<svg style="position:absolute;left:1003px;top:747px" width="12" height="12" viewBox="0 0 12 12"><path d="M11,1 L1,11 M11,5 L5,11 M11,9 L9,11" stroke="#a8a8a8" stroke-width="1.3"/><path d="M12,2 L2,12 M12,6 L6,12 M12,10 L10,12" stroke="#fff" stroke-width="1"/></svg>
<div id="frame"></div>
</div></body></html>
